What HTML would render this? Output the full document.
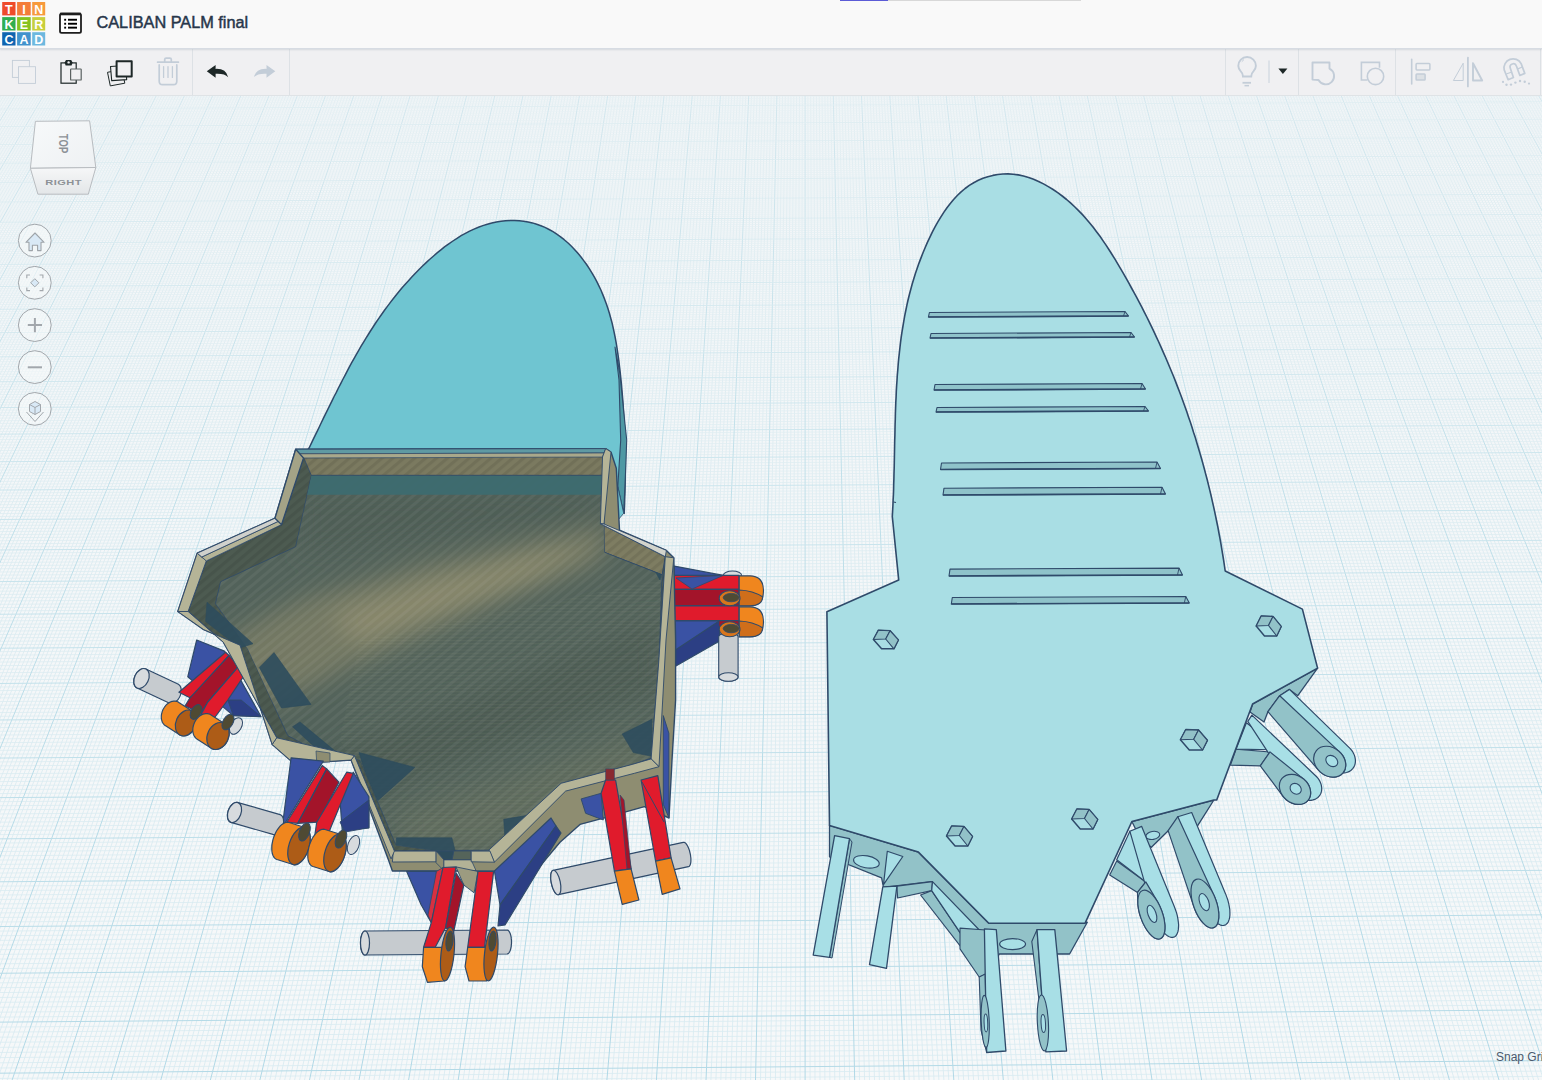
<!DOCTYPE html>
<html><head><meta charset="utf-8">
<style>
html,body{margin:0;padding:0;width:1542px;height:1080px;overflow:hidden;background:#f4f6f7;font-family:"Liberation Sans",sans-serif;}
#hdr{position:absolute;left:0;top:0;width:1542px;height:49px;background:#f9f9f9;border-bottom:1px solid #d7dce3;box-sizing:border-box;z-index:2;box-shadow:0 1px 1.5px rgba(180,188,200,0.45);}
#tb{position:absolute;left:0;top:49px;width:1542px;height:47px;background:#f0f0f2;border-bottom:1px solid #dfe3e6;box-sizing:border-box;}
#cv{position:absolute;left:0;top:0;}
.title{position:absolute;left:96.5px;top:13px;font-size:16.3px;color:#27364a;-webkit-text-stroke:0.45px #27364a;transform-origin:0 0;white-space:nowrap;}
.sep{position:absolute;top:49px;width:1px;height:46px;background:#dde1e5;}
</style></head><body>
<svg id="cv" width="1542" height="1080" viewBox="0 0 1542 1080">
<defs>
<linearGradient id="gbg" gradientUnits="userSpaceOnUse" x1="0" y1="96" x2="0" y2="1080"><stop offset="0" stop-color="#f3f6f8"/><stop offset="1" stop-color="#f6f8f9"/></linearGradient>
<linearGradient id="gmin" gradientUnits="userSpaceOnUse" x1="0" y1="96" x2="0" y2="1080"><stop offset="0" stop-color="#dcebf0"/><stop offset="0.5" stop-color="#d9eaf0"/><stop offset="1" stop-color="#d6eaf1"/></linearGradient>
<linearGradient id="ghmin" gradientUnits="userSpaceOnUse" x1="0" y1="96" x2="0" y2="1080"><stop offset="0" stop-color="#e8f1f4"/><stop offset="0.5" stop-color="#dcecf1"/><stop offset="1" stop-color="#d8ebf1"/></linearGradient>
<linearGradient id="gmaj" gradientUnits="userSpaceOnUse" x1="0" y1="96" x2="0" y2="1080"><stop offset="0" stop-color="#d3e7ee"/><stop offset="0.4" stop-color="#bfdfe9"/><stop offset="1" stop-color="#b0d8e6"/></linearGradient>
<linearGradient id="ghmaj" gradientUnits="userSpaceOnUse" x1="0" y1="96" x2="0" y2="1080"><stop offset="0" stop-color="#e1eef2"/><stop offset="0.4" stop-color="#cbe5ed"/><stop offset="1" stop-color="#b2d9e6"/></linearGradient>
</defs>
<rect x="0" y="96" width="1542" height="984" fill="url(#gbg)"/>
<path d="M-2 96L-612.4 1080M0.9 96L-607.4 1080M3.7 96L-602.5 1080M6.5 96L-597.5 1080M9.3 96L-592.5 1080M12.2 96L-587.6 1080M17.8 96L-577.7 1080M20.6 96L-572.7 1080M23.4 96L-567.8 1080M26.3 96L-562.8 1080M29.1 96L-557.8 1080M31.9 96L-552.9 1080M34.7 96L-547.9 1080M37.6 96L-543 1080M40.4 96L-538 1080M46 96L-528.1 1080M48.8 96L-523.2 1080M51.7 96L-518.2 1080M54.5 96L-513.2 1080M57.3 96L-508.3 1080M60.1 96L-503.3 1080M62.9 96L-498.4 1080M65.8 96L-493.4 1080M68.6 96L-488.5 1080M74.2 96L-478.5 1080M77.1 96L-473.6 1080M79.9 96L-468.6 1080M82.7 96L-463.7 1080M85.5 96L-458.7 1080M88.3 96L-453.8 1080M91.2 96L-448.8 1080M94 96L-443.9 1080M96.8 96L-438.9 1080M102.5 96L-429 1080M105.3 96L-424 1080M108.1 96L-419.1 1080M110.9 96L-414.1 1080M113.7 96L-409.2 1080M116.6 96L-404.2 1080M119.4 96L-399.2 1080M122.2 96L-394.3 1080M125 96L-389.3 1080M130.7 96L-379.4 1080M133.5 96L-374.5 1080M136.3 96L-369.5 1080M139.1 96L-364.6 1080M142 96L-359.6 1080M144.8 96L-354.6 1080M147.6 96L-349.7 1080M150.4 96L-344.7 1080M153.2 96L-339.8 1080M158.9 96L-329.9 1080M161.7 96L-324.9 1080M164.5 96L-319.9 1080M167.4 96L-315 1080M170.2 96L-310 1080M173 96L-305.1 1080M175.8 96L-300.1 1080M178.6 96L-295.2 1080M181.5 96L-290.2 1080M187.1 96L-280.3 1080M189.9 96L-275.3 1080M192.8 96L-270.4 1080M195.6 96L-265.4 1080M198.4 96L-260.5 1080M201.2 96L-255.5 1080M204 96L-250.6 1080M206.9 96L-245.6 1080M209.7 96L-240.7 1080M215.3 96L-230.7 1080M218.2 96L-225.8 1080M221 96L-220.8 1080M223.8 96L-215.9 1080M226.6 96L-210.9 1080M229.4 96L-206 1080M232.3 96L-201 1080M235.1 96L-196 1080M237.9 96L-191.1 1080M243.5 96L-181.2 1080M246.4 96L-176.2 1080M249.2 96L-171.3 1080M252 96L-166.3 1080M254.8 96L-161.4 1080M257.7 96L-156.4 1080M260.5 96L-151.4 1080M263.3 96L-146.5 1080M266.1 96L-141.5 1080M271.8 96L-131.6 1080M274.6 96L-126.7 1080M277.4 96L-121.7 1080M280.2 96L-116.7 1080M283.1 96L-111.8 1080M285.9 96L-106.8 1080M288.7 96L-101.9 1080M291.5 96L-96.9 1080M294.3 96L-92 1080M300 96L-82.1 1080M302.8 96L-77.1 1080M305.6 96L-72.1 1080M308.5 96L-67.2 1080M311.3 96L-62.2 1080M314.1 96L-57.3 1080M316.9 96L-52.3 1080M319.7 96L-47.4 1080M322.6 96L-42.4 1080M328.2 96L-32.5 1080M331 96L-27.5 1080M333.8 96L-22.6 1080M336.7 96L-17.6 1080M339.5 96L-12.7 1080M342.3 96L-7.7 1080M345.1 96L-2.8 1080M348 96L2.2 1080M350.8 96L7.2 1080M356.4 96L17.1 1080M359.2 96L22 1080M362.1 96L27 1080M364.9 96L31.9 1080M367.7 96L36.9 1080M370.5 96L41.9 1080M373.4 96L46.8 1080M376.2 96L51.8 1080M379 96L56.7 1080M384.6 96L66.6 1080M387.5 96L71.6 1080M390.3 96L76.5 1080M393.1 96L81.5 1080M395.9 96L86.5 1080M398.8 96L91.4 1080M401.6 96L96.4 1080M404.4 96L101.3 1080M407.2 96L106.3 1080M412.9 96L116.2 1080M415.7 96L121.1 1080M418.5 96L126.1 1080M421.3 96L131.1 1080M424.1 96L136 1080M427 96L141 1080M429.8 96L145.9 1080M432.6 96L150.9 1080M435.4 96L155.8 1080M441.1 96L165.8 1080M443.9 96L170.7 1080M446.7 96L175.7 1080M449.5 96L180.6 1080M452.4 96L185.6 1080M455.2 96L190.5 1080M458 96L195.5 1080M460.8 96L200.4 1080M463.7 96L205.4 1080M469.3 96L215.3 1080M472.1 96L220.3 1080M474.9 96L225.2 1080M477.8 96L230.2 1080M480.6 96L235.1 1080M483.4 96L240.1 1080M486.2 96L245.1 1080M489.1 96L250 1080M491.9 96L255 1080M497.5 96L264.9 1080M500.3 96L269.8 1080M503.2 96L274.8 1080M506 96L279.7 1080M508.8 96L284.7 1080M511.6 96L289.7 1080M514.4 96L294.6 1080M517.3 96L299.6 1080M520.1 96L304.5 1080M525.7 96L314.4 1080M528.6 96L319.4 1080M531.4 96L324.4 1080M534.2 96L329.3 1080M537 96L334.3 1080M539.8 96L339.2 1080M542.7 96L344.2 1080M545.5 96L349.1 1080M548.3 96L354.1 1080M554 96L364 1080M556.8 96L369 1080M559.6 96L373.9 1080M562.4 96L378.9 1080M565.2 96L383.8 1080M568.1 96L388.8 1080M570.9 96L393.7 1080M573.7 96L398.7 1080M576.5 96L403.7 1080M582.2 96L413.6 1080M585 96L418.5 1080M587.8 96L423.5 1080M590.6 96L428.4 1080M593.5 96L433.4 1080M596.3 96L438.3 1080M599.1 96L443.3 1080M601.9 96L448.3 1080M604.7 96L453.2 1080M610.4 96L463.1 1080M613.2 96L468.1 1080M616 96L473 1080M618.9 96L478 1080M621.7 96L482.9 1080M624.5 96L487.9 1080M627.3 96L492.9 1080M630.1 96L497.8 1080M633 96L502.8 1080M638.6 96L512.7 1080M641.4 96L517.6 1080M644.3 96L522.6 1080M647.1 96L527.6 1080M649.9 96L532.5 1080M652.7 96L537.5 1080M655.5 96L542.4 1080M658.4 96L547.4 1080M661.2 96L552.3 1080M666.8 96L562.2 1080M669.7 96L567.2 1080M672.5 96L572.2 1080M675.3 96L577.1 1080M678.1 96L582.1 1080M680.9 96L587 1080M683.8 96L592 1080M686.6 96L596.9 1080M689.4 96L601.9 1080M695 96L611.8 1080M697.9 96L616.8 1080M700.7 96L621.7 1080M703.5 96L626.7 1080M706.3 96L631.6 1080M709.2 96L636.6 1080M712 96L641.5 1080M714.8 96L646.5 1080M717.6 96L651.5 1080M723.3 96L661.4 1080M726.1 96L666.3 1080M728.9 96L671.3 1080M731.7 96L676.2 1080M734.6 96L681.2 1080M737.4 96L686.2 1080M740.2 96L691.1 1080M743 96L696.1 1080M745.8 96L701 1080M751.5 96L710.9 1080M754.3 96L715.9 1080M757.1 96L720.8 1080M760 96L725.8 1080M762.8 96L730.8 1080M765.6 96L735.7 1080M768.4 96L740.7 1080M771.2 96L745.6 1080M774.1 96L750.6 1080M779.7 96L760.5 1080M782.5 96L765.5 1080M785.3 96L770.4 1080M788.2 96L775.4 1080M791 96L780.3 1080M793.8 96L785.3 1080M796.6 96L790.2 1080M799.5 96L795.2 1080M802.3 96L800.1 1080M807.9 96L810.1 1080M810.7 96L815 1080M813.6 96L820 1080M816.4 96L824.9 1080M819.2 96L829.9 1080M822 96L834.8 1080M824.9 96L839.8 1080M827.7 96L844.7 1080M830.5 96L849.7 1080M836.1 96L859.6 1080M839 96L864.6 1080M841.8 96L869.5 1080M844.6 96L874.5 1080M847.4 96L879.4 1080M850.2 96L884.4 1080M853.1 96L889.4 1080M855.9 96L894.3 1080M858.7 96L899.3 1080M864.4 96L909.2 1080M867.2 96L914.1 1080M870 96L919.1 1080M872.8 96L924 1080M875.6 96L929 1080M878.5 96L934 1080M881.3 96L938.9 1080M884.1 96L943.9 1080M886.9 96L948.8 1080M892.6 96L958.7 1080M895.4 96L963.7 1080M898.2 96L968.7 1080M901 96L973.6 1080M903.9 96L978.6 1080M906.7 96L983.5 1080M909.5 96L988.5 1080M912.3 96L993.4 1080M915.2 96L998.4 1080M920.8 96L1008.3 1080M923.6 96L1013.3 1080M926.4 96L1018.2 1080M929.3 96L1023.2 1080M932.1 96L1028.1 1080M934.9 96L1033.1 1080M937.7 96L1038 1080M940.5 96L1043 1080M943.4 96L1048 1080M949 96L1057.9 1080M951.8 96L1062.8 1080M954.7 96L1067.8 1080M957.5 96L1072.7 1080M960.3 96L1077.7 1080M963.1 96L1082.6 1080M965.9 96L1087.6 1080M968.8 96L1092.6 1080M971.6 96L1097.5 1080M977.2 96L1107.4 1080M980.1 96L1112.4 1080M982.9 96L1117.3 1080M985.7 96L1122.3 1080M988.5 96L1127.3 1080M991.3 96L1132.2 1080M994.2 96L1137.2 1080M997 96L1142.1 1080M999.8 96L1147.1 1080M1005.5 96L1157 1080M1008.3 96L1161.9 1080M1011.1 96L1166.9 1080M1013.9 96L1171.9 1080M1016.7 96L1176.8 1080M1019.6 96L1181.8 1080M1022.4 96L1186.7 1080M1025.2 96L1191.7 1080M1028 96L1196.6 1080M1033.7 96L1206.5 1080M1036.5 96L1211.5 1080M1039.3 96L1216.5 1080M1042.1 96L1221.4 1080M1045 96L1226.4 1080M1047.8 96L1231.3 1080M1050.6 96L1236.3 1080M1053.4 96L1241.2 1080M1056.2 96L1246.2 1080M1061.9 96L1256.1 1080M1064.7 96L1261.1 1080M1067.5 96L1266 1080M1070.4 96L1271 1080M1073.2 96L1275.9 1080M1076 96L1280.9 1080M1078.8 96L1285.8 1080M1081.6 96L1290.8 1080M1084.5 96L1295.8 1080M1090.1 96L1305.7 1080M1092.9 96L1310.6 1080M1095.8 96L1315.6 1080M1098.6 96L1320.5 1080M1101.4 96L1325.5 1080M1104.2 96L1330.5 1080M1107 96L1335.4 1080M1109.9 96L1340.4 1080M1112.7 96L1345.3 1080M1118.3 96L1355.2 1080M1121.1 96L1360.2 1080M1124 96L1365.1 1080M1126.8 96L1370.1 1080M1129.6 96L1375.1 1080M1132.4 96L1380 1080M1135.3 96L1385 1080M1138.1 96L1389.9 1080M1140.9 96L1394.9 1080M1146.5 96L1404.8 1080M1149.4 96L1409.8 1080M1152.2 96L1414.7 1080M1155 96L1419.7 1080M1157.8 96L1424.6 1080M1160.7 96L1429.6 1080M1163.5 96L1434.5 1080M1166.3 96L1439.5 1080M1169.1 96L1444.4 1080M1174.8 96L1454.4 1080M1177.6 96L1459.3 1080M1180.4 96L1464.3 1080M1183.2 96L1469.2 1080M1186.1 96L1474.2 1080M1188.9 96L1479.1 1080M1191.7 96L1484.1 1080M1194.5 96L1489.1 1080M1197.3 96L1494 1080M1203 96L1503.9 1080M1205.8 96L1508.9 1080M1208.6 96L1513.8 1080M1211.4 96L1518.8 1080M1214.3 96L1523.7 1080M1217.1 96L1528.7 1080M1219.9 96L1533.7 1080M1222.7 96L1538.6 1080M1225.6 96L1543.6 1080M1231.2 96L1553.5 1080M1234 96L1558.4 1080M1236.8 96L1563.4 1080M1239.7 96L1568.3 1080M1242.5 96L1573.3 1080M1245.3 96L1578.3 1080M1248.1 96L1583.2 1080M1251 96L1588.2 1080M1253.8 96L1593.1 1080M1259.4 96L1603 1080M1262.2 96L1608 1080M1265.1 96L1613 1080M1267.9 96L1617.9 1080M1270.7 96L1622.9 1080M1273.5 96L1627.8 1080M1276.4 96L1632.8 1080M1279.2 96L1637.7 1080M1282 96L1642.7 1080M1287.6 96L1652.6 1080M1290.5 96L1657.6 1080M1293.3 96L1662.5 1080M1296.1 96L1667.5 1080M1298.9 96L1672.4 1080M1301.7 96L1677.4 1080M1304.6 96L1682.3 1080M1307.4 96L1687.3 1080M1310.2 96L1692.3 1080M1315.9 96L1702.2 1080M1318.7 96L1707.1 1080M1321.5 96L1712.1 1080M1324.3 96L1717 1080M1327.1 96L1722 1080M1330 96L1726.9 1080M1332.8 96L1731.9 1080M1335.6 96L1736.9 1080M1338.4 96L1741.8 1080M1344.1 96L1751.7 1080M1346.9 96L1756.7 1080M1349.7 96L1761.6 1080M1352.5 96L1766.6 1080M1355.4 96L1771.6 1080M1358.2 96L1776.5 1080M1361 96L1781.5 1080M1363.8 96L1786.4 1080M1366.7 96L1791.4 1080M1372.3 96L1801.3 1080M1375.1 96L1806.2 1080M1377.9 96L1811.2 1080M1380.8 96L1816.2 1080M1383.6 96L1821.1 1080M1386.4 96L1826.1 1080M1389.2 96L1831 1080M1392 96L1836 1080M1394.9 96L1840.9 1080M1400.5 96L1850.9 1080M1403.3 96L1855.8 1080M1406.2 96L1860.8 1080M1409 96L1865.7 1080M1411.8 96L1870.7 1080M1414.6 96L1875.6 1080M1417.4 96L1880.6 1080M1420.3 96L1885.5 1080M1423.1 96L1890.5 1080M1428.7 96L1900.4 1080M1431.6 96L1905.4 1080M1434.4 96L1910.3 1080M1437.2 96L1915.3 1080M1440 96L1920.2 1080M1442.8 96L1925.2 1080M1445.7 96L1930.1 1080M1448.5 96L1935.1 1080M1451.3 96L1940.1 1080M1457 96L1950 1080M1459.8 96L1954.9 1080M1462.6 96L1959.9 1080M1465.4 96L1964.8 1080M1468.2 96L1969.8 1080M1471.1 96L1974.8 1080M1473.9 96L1979.7 1080M1476.7 96L1984.7 1080M1479.5 96L1989.6 1080M1485.2 96L1999.5 1080M1488 96L2004.5 1080M1490.8 96L2009.4 1080M1493.6 96L2014.4 1080M1496.5 96L2019.4 1080M1499.3 96L2024.3 1080M1502.1 96L2029.3 1080M1504.9 96L2034.2 1080M1507.7 96L2039.2 1080M1513.4 96L2049.1 1080M1516.2 96L2054.1 1080M1519 96L2059 1080M1521.9 96L2064 1080M1524.7 96L2068.9 1080M1527.5 96L2073.9 1080M1530.3 96L2078.8 1080M1533.1 96L2083.8 1080M1536 96L2088.7 1080M1541.6 96L2098.7 1080" stroke="url(#gmin)" stroke-width="0.8" fill="none"/>
<path d="M-464.4 95.6L2063.2 83.9M-466.1 97.3L2064.8 85.6M-467.7 99.1L2066.4 87.3M-469.4 100.8L2068.1 89M-471.1 102.5L2069.7 90.7M-472.8 104.2L2071.4 92.4M-474.5 106L2073.1 94.1M-476.2 107.7L2074.7 95.8M-477.9 109.4L2076.4 97.5M-481.3 112.9L2079.7 100.9M-483 114.7L2081.4 102.6M-484.7 116.5L2083.1 104.4M-486.4 118.2L2084.8 106.1M-488.2 120L2086.5 107.8M-489.9 121.8L2088.2 109.6M-491.6 123.5L2089.9 111.3M-493.4 125.3L2091.6 113.1M-495.1 127.1L2093.3 114.8M-498.6 130.7L2096.8 118.4M-500.4 132.5L2098.5 120.1M-502.1 134.3L2100.2 121.9M-503.9 136.1L2102 123.7M-505.7 138L2103.7 125.5M-507.5 139.8L2105.5 127.3M-509.3 141.6L2107.2 129.1M-511 143.4L2109 130.9M-512.8 145.3L2110.7 132.7M-516.4 149L2114.3 136.3M-518.2 150.8L2116 138.1M-520.1 152.7L2117.8 139.9M-521.9 154.5L2119.6 141.8M-523.7 156.4L2121.4 143.6M-525.5 158.3L2123.2 145.4M-527.4 160.2L2125 147.3M-529.2 162L2126.8 149.1M-531 163.9L2128.6 151M-534.8 167.7L2132.2 154.7M-536.6 169.6L2134.1 156.6M-538.5 171.5L2135.9 158.4M-540.3 173.5L2137.7 160.3M-542.2 175.4L2139.6 162.2M-544.1 177.3L2141.4 164.1M-546 179.2L2143.3 166M-547.9 181.2L2145.1 167.9M-549.8 183.1L2147 169.8M-553.6 187L2150.7 173.6M-555.5 189L2152.6 175.5M-557.4 190.9L2154.5 177.5M-559.3 192.9L2156.3 179.4M-561.3 194.9L2158.2 181.3M-563.2 196.9L2160.1 183.3M-565.1 198.9L2162 185.2M-567.1 200.9L2163.9 187.2M-569 202.8L2165.9 189.1M-572.9 206.9L2169.7 193.1M-574.9 208.9L2171.6 195.1M-576.9 210.9L2173.6 197M-578.9 212.9L2175.5 199M-580.8 215L2177.4 201M-582.8 217L2179.4 203M-584.8 219L2181.4 205M-586.8 221.1L2183.3 207M-588.8 223.1L2185.3 209M-592.9 227.3L2189.2 213.1M-594.9 229.3L2191.2 215.1M-596.9 231.4L2193.2 217.2M-599 233.5L2195.2 219.2M-601 235.6L2197.2 221.3M-603.1 237.7L2199.2 223.3M-605.1 239.8L2201.2 225.4M-607.2 241.9L2203.2 227.5M-609.2 244L2205.3 229.5M-613.4 248.3L2209.3 233.7M-615.5 250.4L2211.4 235.8M-617.6 252.6L2213.4 237.9M-619.7 254.7L2215.5 240M-621.8 256.9L2217.5 242.1M-623.9 259L2219.6 244.2M-626 261.2L2221.7 246.3M-628.1 263.4L2223.8 248.5M-630.2 265.5L2225.8 250.6M-634.5 269.9L2230 254.9M-636.7 272.1L2232.1 257.1M-638.8 274.3L2234.2 259.2M-641 276.5L2236.4 261.4M-643.1 278.8L2238.5 263.6M-645.3 281L2240.6 265.7M-647.5 283.2L2242.7 267.9M-649.7 285.5L2244.9 270.1M-651.9 287.7L2247 272.3M-656.3 292.2L2251.3 276.7M-658.5 294.5L2253.5 279M-660.7 296.8L2255.7 281.2M-662.9 299L2257.9 283.4M-665.2 301.3L2260.1 285.7M-667.4 303.6L2262.2 287.9M-669.6 305.9L2264.4 290.2M-671.9 308.2L2266.6 292.4M-674.2 310.5L2268.9 294.7M-678.7 315.2L2273.3 299.2M-681 317.5L2275.5 301.5M-683.3 319.9L2277.8 303.8M-685.6 322.2L2280 306.1M-687.9 324.6L2282.3 308.4M-690.2 327L2284.5 310.7M-692.5 329.3L2286.8 313.1M-694.8 331.7L2289.1 315.4M-697.1 334.1L2291.4 317.7M-701.8 338.9L2295.9 322.4M-704.2 341.3L2298.3 324.8M-706.5 343.7L2300.6 327.2M-708.9 346.1L2302.9 329.5M-711.3 348.6L2305.2 331.9M-713.7 351L2307.5 334.3M-716 353.5L2309.9 336.7M-718.4 355.9L2312.2 339.1M-720.8 358.4L2314.6 341.5M-725.7 363.3L2319.3 346.4M-728.1 365.8L2321.7 348.8M-730.5 368.3L2324.1 351.2M-733 370.8L2326.4 353.7M-735.4 373.3L2328.8 356.1M-737.9 375.9L2331.2 358.6M-740.4 378.4L2333.7 361.1M-742.8 380.9L2336.1 363.5M-745.3 383.5L2338.5 366M-750.3 388.6L2343.4 371M-752.8 391.1L2345.8 373.5M-755.3 393.7L2348.3 376.1M-757.8 396.3L2350.8 378.6M-760.4 398.9L2353.2 381.1M-762.9 401.5L2355.7 383.7M-765.5 404.1L2358.2 386.2M-768 406.7L2360.7 388.8M-770.6 409.3L2363.2 391.4M-775.7 414.6L2368.3 396.5M-778.3 417.3L2370.8 399.1M-780.9 419.9L2373.3 401.7M-783.5 422.6L2375.9 404.3M-786.1 425.3L2378.4 406.9M-788.8 428L2381 409.6M-791.4 430.7L2383.6 412.2M-794 433.4L2386.2 414.8M-796.7 436.1L2388.7 417.5M-802 441.5L2393.9 422.8M-804.7 444.3L2396.6 425.5M-807.4 447L2399.2 428.2M-810.1 449.8L2401.8 430.9M-812.8 452.6L2404.5 433.6M-815.5 455.3L2407.1 436.3M-818.2 458.1L2409.8 439M-820.9 460.9L2412.4 441.8M-823.7 463.7L2415.1 444.5M-829.2 469.4L2420.5 450M-831.9 472.2L2423.2 452.8M-834.7 475.1L2425.9 455.6M-837.5 477.9L2428.6 458.4M-840.3 480.8L2431.4 461.2M-843.1 483.7L2434.1 464M-845.9 486.5L2436.9 466.8M-848.7 489.4L2439.6 469.6M-851.6 492.3L2442.4 472.5M-857.3 498.2L2447.9 478.2M-860.1 501.1L2450.7 481M-863 504L2453.5 483.9M-865.9 507L2456.4 486.8M-868.8 510L2459.2 489.7M-871.7 512.9L2462 492.6M-874.6 515.9L2464.9 495.5M-877.5 518.9L2467.7 498.4M-880.5 521.9L2470.6 501.4M-886.4 528L2476.3 507.2M-889.3 531L2479.2 510.2M-892.3 534.1L2482.1 513.2M-895.3 537.1L2485.1 516.2M-898.3 540.2L2488 519.2M-901.3 543.3L2490.9 522.2M-904.3 546.4L2493.9 525.2M-907.3 549.5L2496.8 528.2M-910.4 552.6L2499.8 531.3M-916.5 558.8L2505.7 537.4M-919.6 562L2508.7 540.4M-922.6 565.1L2511.7 543.5M-925.7 568.3L2514.8 546.6M-928.8 571.5L2517.8 549.7M-931.9 574.7L2520.8 552.8M-935.1 577.9L2523.9 556M-938.2 581.1L2526.9 559.1M-941.4 584.3L2530 562.2M-947.7 590.8L2536.2 568.6M-950.9 594.1L2539.3 571.7M-954.1 597.3L2542.4 574.9M-957.3 600.6L2545.5 578.1M-960.5 603.9L2548.7 581.4M-963.7 607.2L2551.8 584.6M-967 610.6L2555 587.8M-970.2 613.9L2558.2 591.1M-973.5 617.2L2561.3 594.3M-980.1 624L2567.7 600.9M-983.4 627.3L2571 604.2M-986.7 630.7L2574.2 607.5M-990 634.1L2577.4 610.8M-993.3 637.6L2580.7 614.2M-996.7 641L2584 617.5M-1000.1 644.4L2587.2 620.9M-1003.4 647.9L2590.5 624.2M-1006.8 651.4L2593.8 627.6M-1013.6 658.4L2600.5 634.4M-1017.1 661.9L2603.8 637.9M-1020.5 665.4L2607.2 641.3M-1024 668.9L2610.5 644.7M-1027.4 672.5L2613.9 648.2M-1030.9 676.1L2617.3 651.7M-1034.4 679.6L2620.7 655.2M-1037.9 683.2L2624.1 658.7M-1041.4 686.8L2627.6 662.2M-1048.5 694.1L2634.4 669.2M-1052.1 697.7L2637.9 672.8M-1055.6 701.4L2641.4 676.4M-1059.2 705.1L2644.9 679.9M-1062.8 708.8L2648.4 683.5M-1066.4 712.5L2651.9 687.1M-1070.1 716.2L2655.5 690.8M-1073.7 719.9L2659 694.4M-1077.4 723.7L2662.6 698M-1084.7 731.2L2669.7 705.4M-1088.4 735L2673.3 709.1M-1092.2 738.8L2677 712.8M-1095.9 742.6L2680.6 716.5M-1099.6 746.5L2684.2 720.2M-1103.4 750.3L2687.9 724M-1107.2 754.2L2691.6 727.7M-1111 758.1L2695.2 731.5M-1114.8 762L2699 735.3M-1122.4 769.8L2706.4 743M-1126.3 773.8L2710.1 746.8M-1130.1 777.7L2713.9 750.6M-1134 781.7L2717.7 754.5M-1137.9 785.7L2721.5 758.4M-1141.8 789.7L2725.3 762.3M-1145.7 793.7L2729.1 766.2M-1149.7 797.8L2732.9 770.1M-1153.7 801.8L2736.8 774.1M-1161.6 810L2744.5 782M-1165.6 814.1L2748.4 786M-1169.7 818.2L2752.4 790M-1173.7 822.4L2756.3 794.1M-1177.8 826.5L2760.2 798.1M-1181.8 830.7L2764.2 802.2M-1185.9 834.9L2768.2 806.2M-1190 839.1L2772.2 810.3M-1194.2 843.3L2776.2 814.4M-1202.5 851.8L2784.2 822.7M-1206.6 856.1L2788.3 826.9M-1210.8 860.4L2792.4 831M-1215 864.7L2796.5 835.2M-1219.3 869L2800.6 839.4M-1223.5 873.4L2804.7 843.7M-1227.8 877.8L2808.9 847.9M-1232.1 882.2L2813 852.2M-1236.4 886.6L2817.2 856.5M-1245 895.4L2825.6 865.1M-1249.4 899.9L2829.8 869.4M-1253.8 904.4L2834.1 873.8M-1258.2 908.9L2838.3 878.1M-1262.6 913.4L2842.6 882.5M-1267 917.9L2846.9 886.9M-1271.5 922.5L2851.3 891.4M-1275.9 927.1L2855.6 895.8M-1280.4 931.7L2860 900.3M-1289.4 940.9L2868.7 909.3M-1294 945.6L2873.1 913.8M-1298.6 950.3L2877.6 918.3M-1303.1 955L2882 922.9M-1307.8 959.7L2886.5 927.5M-1312.4 964.4L2891 932.1M-1317 969.2L2895.5 936.7M-1321.7 974L2900 941.3M-1326.4 978.8L2904.6 946M-1335.8 988.5L2913.7 955.4M-1340.6 993.3L2918.3 960.1M-1345.3 998.2L2923 964.8M-1350.1 1003.1L2927.6 969.6M-1355 1008.1L2932.3 974.4M-1359.8 1013L2937 979.2M-1364.7 1018L2941.7 984M-1369.5 1023L2946.4 988.9M-1374.4 1028L2951.2 993.7M-1384.3 1038.1L2960.7 1003.5M-1389.3 1043.2L2965.6 1008.5M-1394.3 1048.3L2970.4 1013.4M-1399.3 1053.5L2975.3 1018.4M-1404.3 1058.6L2980.1 1023.4M-1409.4 1063.8L2985.1 1028.4M-1414.5 1069L2990 1033.5M-1419.6 1074.3L2994.9 1038.6M-1424.7 1079.5L2999.9 1043.7M-1435 1090.1L3009.9 1053.9M-1440.2 1095.4L3014.9 1059.1M-1445.5 1100.8L3020 1064.3M-1450.7 1106.2L3025.1 1069.5M-1456 1111.6L3030.2 1074.7M-1461.3 1117L3035.3 1080" stroke="url(#ghmin)" stroke-width="0.8" fill="none"/>
<path d="M15 96L-582.6 1080M43.2 96L-533.1 1080M71.4 96L-483.5 1080M99.6 96L-433.9 1080M127.9 96L-384.4 1080M156.1 96L-334.8 1080M184.3 96L-285.3 1080M212.5 96L-235.7 1080M240.7 96L-186.1 1080M268.9 96L-136.6 1080M297.2 96L-87 1080M325.4 96L-37.4 1080M353.6 96L12.1 1080M381.8 96L61.7 1080M410 96L111.2 1080M438.3 96L160.8 1080M466.5 96L210.4 1080M494.7 96L259.9 1080M522.9 96L309.5 1080M551.1 96L359 1080M579.4 96L408.6 1080M607.6 96L458.2 1080M635.8 96L507.7 1080M664 96L557.3 1080M692.2 96L606.9 1080M720.4 96L656.4 1080M748.7 96L706 1080M776.9 96L755.5 1080M805.1 96L805.1 1080M833.3 96L854.7 1080M861.5 96L904.2 1080M889.8 96L953.8 1080M918 96L1003.3 1080M946.2 96L1052.9 1080M974.4 96L1102.5 1080M1002.6 96L1152 1080M1030.8 96L1201.6 1080M1059.1 96L1251.2 1080M1087.3 96L1300.7 1080M1115.5 96L1350.3 1080M1143.7 96L1399.8 1080M1171.9 96L1449.4 1080M1200.2 96L1499 1080M1228.4 96L1548.5 1080M1256.6 96L1598.1 1080M1284.8 96L1647.6 1080M1313 96L1697.2 1080M1341.3 96L1746.8 1080M1369.5 96L1796.3 1080M1397.7 96L1845.9 1080M1425.9 96L1895.5 1080M1454.1 96L1945 1080M1482.3 96L1994.6 1080M1510.6 96L2044.1 1080M1538.8 96L2093.7 1080" stroke="url(#gmaj)" stroke-width="1" fill="none"/>
<path d="M-479.6 111.2L2078.1 99.2M-496.9 128.9L2095 116.6M-514.6 147.1L2112.5 134.5M-532.9 165.8L2130.4 152.8M-551.7 185.1L2148.8 171.7M-571 204.9L2167.8 191.1M-590.9 225.2L2187.3 211.1M-611.3 246.2L2207.3 231.6M-632.4 267.7L2227.9 252.7M-654.1 290L2249.2 274.5M-676.4 312.9L2271.1 297M-699.5 336.5L2293.7 320.1M-723.3 360.9L2316.9 343.9M-747.8 386L2340.9 368.5M-773.2 412L2365.7 393.9M-799.3 438.8L2391.3 420.2M-826.4 466.6L2417.8 447.3M-854.4 495.2L2445.2 475.3M-883.4 524.9L2473.5 504.3M-913.4 555.7L2502.8 534.3M-944.5 587.6L2533.1 565.4M-976.8 620.6L2564.5 597.6M-1010.2 654.9L2597.2 631M-1045 690.5L2631 665.7M-1081.1 727.4L2666.1 701.7M-1118.6 765.9L2702.7 739.1M-1157.6 805.9L2740.7 778.1M-1198.3 847.6L2780.2 818.6M-1240.7 891L2821.4 860.8M-1284.9 936.3L2864.3 904.8M-1331.1 983.6L2909.1 950.7M-1379.4 1033.1L2956 998.6M-1429.9 1084.8L3004.9 1048.8" stroke="url(#ghmaj)" stroke-width="1" fill="none"/>
<g id="leftmodel">
<defs>
<pattern id="stripes" patternUnits="userSpaceOnUse" width="7" height="7" patternTransform="rotate(-40)">
<rect x="0" y="0" width="7" height="3" fill="#ffffff" fill-opacity="0.05"/>
</pattern>
<pattern id="stripes2" patternUnits="userSpaceOnUse" width="7" height="7" patternTransform="rotate(-40)">
<rect x="0" y="0" width="7" height="3.2" fill="#000000" fill-opacity="0.08"/>
</pattern>
<pattern id="hlines" patternUnits="userSpaceOnUse" width="20" height="3.2">
<rect x="0" y="0" width="20" height="1" fill="#c8c49a" fill-opacity="0.07"/>
</pattern>
<filter id="blur8" x="-30%" y="-30%" width="160%" height="160%"><feGaussianBlur stdDeviation="12"/></filter>
<clipPath id="floorclip"><polygon points="311.3,475.4 603,475.4 604.6,552.4 662.1,574.8 658.9,660 651.1,757.8 632.2,764.4 561.1,783.3 488.9,850 436.7,850.7 396,845 360,760 316.7,751.1 287.8,735.6 247.8,648.9 215.4,603.7 220.6,581.7 295.7,546.7"/></clipPath>
</defs>
<path d="M309.1 448.0L311.2 443.7L313.2 439.4L315.3 435.1L317.4 430.8L319.5 426.5L321.5 422.2L323.6 417.9L325.7 413.6L327.8 409.4L329.9 405.1L332.0 400.8L334.1 396.5L336.3 392.3L338.4 388.0L340.6 383.8L342.8 379.5L345.0 375.3L347.2 371.1L349.4 366.9L351.7 362.7L354.0 358.6L356.4 354.4L358.7 350.3L361.1 346.2L363.6 342.1L366.0 338.1L368.6 334.0L371.1 330.0L373.7 326.0L376.3 322.0L379.0 318.1L381.7 314.2L384.5 310.3L387.4 306.4L390.2 302.6L393.2 298.8L396.2 295.0L399.2 291.3L402.3 287.6L405.5 284.0L408.7 280.4L412.0 276.8L415.4 273.2L418.8 269.7L422.3 266.3L425.9 262.9L429.5 259.5L433.3 256.2L437.1 252.9L440.9 249.8L444.8 246.7L448.8 243.8L452.9 241.0L457.0 238.3L461.1 235.7L465.4 233.4L469.6 231.1L474.0 229.1L478.4 227.3L482.8 225.6L487.3 224.2L491.8 223.0L496.4 222.1L501.0 221.3L505.5 220.8L510.1 220.6L514.6 220.5L519.2 220.8L523.6 221.2L528.1 222.0L532.4 222.9L536.7 224.2L540.9 225.7L545.0 227.4L549.1 229.5L553.0 231.7L556.8 234.2L560.6 236.8L564.2 239.7L567.8 242.8L571.2 246.0L574.5 249.4L577.7 253.0L580.8 256.7L583.7 260.6L586.6 264.5L589.3 268.6L591.9 272.8L594.4 277.1L596.7 281.4L598.9 285.9L601.0 290.3L602.9 294.9L604.7 299.4L606.4 304.0L608.0 308.7L609.4 313.3L610.7 318.0L612.0 322.7L613.1 327.5L614.1 332.2L615.1 337.0L616.0 341.8L616.8 346.6L617.5 351.4L618.2 356.2L618.9 361.0L619.4 365.8L620.0 370.6L620.5 375.4L621.0 380.2L621.5 385.0L621.9 389.7L622.3 394.5L622.7 399.2L623.0 404.0L623.4 408.7L623.6 413.4L623.9 418.1L624.2 422.9L624.4 427.6L624.6 432.3L624.7 437.0L624.9 441.7L625.0 446.4L625.1 451.2L625.2 455.9L625.2 460.6L625.2 465.4L625.2 470.1L625.2 474.9L625.2 479.7L625.1 484.4L625.0 489.2L624.9 494.0L624.7 498.8L624.6 503.7L624.4 508.5L624.2 513.4L605 460L300 460Z" fill="#6fc5d1" stroke="#2f4a6a" stroke-width="1.5" stroke-linejoin="round"/>
<polygon points="615.0,347.0 619.9,373.6 623.5,409.7 626.7,440.0 625.9,464.4 623.7,513.3 617.8,486.7 620.7,440.0 619.0,380.0" fill="#4e98a4" stroke="#2f4a6a" stroke-width="1.1" stroke-linejoin="round"/>
<polygon points="613.3,468.0 617.8,486.7 623.7,513.3 618.0,520.0" fill="#6fc5d1" stroke="#2f4a6a" stroke-width="0.8" stroke-linejoin="round"/>
<polygon points="719.6,620.7 719.6,641.1 672.4,668.0 669.6,620.7" fill="#2c3f84" stroke="#2f4a6a" stroke-width="1.2" stroke-linejoin="round"/>
<polygon points="669.6,620.7 719.6,620.7 672.4,652.0" fill="#3a52a4" stroke="#2f4a6a" stroke-width="1.2" stroke-linejoin="round"/>
<ellipse cx="732.5" cy="575.0" rx="9.0" ry="4.0" transform="rotate(0.0 732.5 575.0)" fill="#d7dbde" stroke="#2f4a6a" stroke-width="1.1"/>
<polygon points="674.3,566.1 723.3,575.4 674.3,589.3" fill="#3a52a4" stroke="#2f4a6a" stroke-width="1.2" stroke-linejoin="round"/>
<polygon points="719.0,619.0 739.2,619.0 739.2,627.0 719.0,627.0" fill="#a3142a" stroke="#2f4a6a" stroke-width="0.6" stroke-linejoin="round"/>
<polygon points="674.3,575.4 739.1,575.4 739.1,589.3 674.3,589.3" fill="#e01b2c" stroke="#2f4a6a" stroke-width="1.2" stroke-linejoin="round"/>
<polygon points="674.3,589.3 739.1,589.3 739.1,605.9 674.3,605.9" fill="#a3142a" stroke="#2f4a6a" stroke-width="1.2" stroke-linejoin="round"/>
<polygon points="676.0,578.0 723.3,575.4 692.0,589.0" fill="#3a52a4" stroke="#2f4a6a" stroke-width="0.8" stroke-linejoin="round"/>
<polygon points="671.5,605.9 739.1,605.9 739.1,620.7 671.5,620.7" fill="#e01b2c" stroke="#2f4a6a" stroke-width="1.2" stroke-linejoin="round"/>
<polygon points="718.7,637.0 718.8,636.5 719.0,635.9 719.4,635.4 720.0,634.9 720.7,634.4 721.5,634.0 722.5,633.7 723.5,633.4 724.7,633.1 725.9,632.9 727.1,632.8 728.4,632.8 729.7,632.8 730.9,632.9 732.1,633.1 733.2,633.4 734.3,633.7 735.3,634.0 736.1,634.4 736.8,634.9 737.4,635.4 737.8,635.9 738.0,636.5 738.1,637.0 738.1,677.0 738.0,677.5 737.8,678.1 737.4,678.6 736.8,679.1 736.1,679.6 735.3,680.0 734.3,680.3 733.2,680.6 732.1,680.9 730.9,681.1 729.7,681.2 728.4,681.2 727.1,681.2 725.9,681.1 724.7,680.9 723.5,680.6 722.5,680.3 721.5,680.0 720.7,679.6 720.0,679.1 719.4,678.6 719.0,678.1 718.8,677.5 718.7,677.0" fill="#c6cbcf" stroke="#2f4a6a" stroke-width="1.1" stroke-linejoin="round"/>
<ellipse cx="728.4" cy="677.0" rx="9.7" ry="4.2" transform="rotate(0.0 728.4 677.0)" fill="#d7dbde" stroke="#2f4a6a" stroke-width="1.1"/>
<path d="M739.2 575.8 H750 Q763.5 576.0 763.5 590.8 Q763.5 605.8 750 605.8 H739.2 Z" fill="#f0861e" stroke="#2f4a6a" stroke-width="1.2"/>
<path d="M739.2 590.0 Q753 590.5 762.8 597.0 Q762 605.8 750 605.8 H739.2 Z" fill="#cf6e1a" stroke="#2f4a6a" stroke-width="1.1"/>
<ellipse cx="729.6" cy="598.3" rx="10.4" ry="7.5" transform="rotate(0.0 729.6 598.3)" fill="#d9761c" stroke="#2f4a6a" stroke-width="1.1"/>
<ellipse cx="731.2" cy="597.6" rx="8.0" ry="4.2" transform="rotate(0.0 731.2 597.6)" fill="#4f4a33" stroke="#2f4a6a" stroke-width="0.8"/>
<path d="M739.2 606.8 H750 Q763.5 607.0 763.5 621.8 Q763.5 636.8 750 636.8 H739.2 Z" fill="#f0861e" stroke="#2f4a6a" stroke-width="1.2"/>
<path d="M739.2 621.0 Q753 621.5 762.8 628.0 Q762 636.8 750 636.8 H739.2 Z" fill="#cf6e1a" stroke="#2f4a6a" stroke-width="1.1"/>
<ellipse cx="729.6" cy="629.3" rx="10.4" ry="7.5" transform="rotate(0.0 729.6 629.3)" fill="#d9761c" stroke="#2f4a6a" stroke-width="1.1"/>
<ellipse cx="731.2" cy="628.6" rx="8.0" ry="4.2" transform="rotate(0.0 731.2 628.6)" fill="#4f4a33" stroke="#2f4a6a" stroke-width="0.8"/>
<polygon points="196.7,640.0 224.4,651.1 261.1,716.7 233.3,715.6 187.8,676.7" fill="#3a52a4" stroke="#2f4a6a" stroke-width="1.2" stroke-linejoin="round"/>
<polygon points="241.1,700.0 261.1,716.7 233.3,715.6 227.8,700.0" fill="#2c3f84" stroke="#2f4a6a" stroke-width="0.9" stroke-linejoin="round"/>
<polygon points="133.8,681.9 133.8,680.7 133.9,679.4 134.2,678.1 134.6,676.8 135.2,675.5 135.8,674.3 136.5,673.2 137.3,672.1 138.2,671.2 139.2,670.4 140.2,669.7 141.2,669.1 142.2,668.8 143.2,668.6 144.1,668.5 145.1,668.7 145.9,669.0 177.9,684.0 178.7,684.5 179.4,685.1 180.0,685.8 180.5,686.7 180.9,687.8 181.1,688.9 181.2,690.1 181.2,691.3 181.1,692.6 180.8,693.9 180.4,695.2 179.8,696.5 179.2,697.7 178.5,698.8 177.7,699.9 176.8,700.8 175.8,701.6 174.8,702.3 173.8,702.9 172.8,703.2 171.8,703.4 170.9,703.5 169.9,703.3 169.1,703.0 137.1,688.0 136.3,687.5 135.6,686.9 135.0,686.2 134.5,685.3 134.1,684.2 133.9,683.1" fill="#c6cbcf" stroke="#2f4a6a" stroke-width="1.2" stroke-linejoin="round"/>
<ellipse cx="141.5" cy="678.5" rx="7.0" ry="10.5" transform="rotate(25.0 141.5 678.5)" fill="#d7dbde" stroke="#2f4a6a" stroke-width="1.2"/>
<polygon points="178.9,692.2 225.6,652.2 229.0,655.5 196.7,692.2 190.0,697.8" fill="#e01b2c" stroke="#2f4a6a" stroke-width="1.2" stroke-linejoin="round"/>
<polygon points="190.0,697.8 229.0,655.5 238.9,666.1 207.8,702.0 201.0,713.0 185.0,706.0" fill="#a3142a" stroke="#2f4a6a" stroke-width="1.2" stroke-linejoin="round"/>
<polygon points="238.9,666.1 245.6,673.3 227.8,700.0 214.4,717.8 201.1,714.4 207.8,702.0" fill="#e01b2c" stroke="#2f4a6a" stroke-width="1.2" stroke-linejoin="round"/>
<polygon points="161.3,716.5 161.4,714.8 161.8,713.1 162.3,711.4 162.9,709.8 163.8,708.2 164.7,706.8 165.8,705.4 167.0,704.2 168.3,703.2 169.6,702.4 171.0,701.7 172.4,701.3 173.8,701.1 175.2,701.1 176.5,701.3 177.7,701.8 178.8,702.4 192.8,711.4 193.9,712.3 194.7,713.3 195.5,714.5 196.0,715.9 196.4,717.3 196.7,718.9 196.7,720.5 196.6,722.2 196.2,723.9 195.7,725.6 195.1,727.2 194.2,728.8 193.3,730.2 192.2,731.6 191.0,732.8 189.7,733.8 188.4,734.6 187.0,735.3 185.6,735.7 184.2,735.9 182.8,735.9 181.5,735.7 180.3,735.2 179.2,734.6 165.2,725.6 164.1,724.7 163.3,723.7 162.5,722.5 162.0,721.1 161.6,719.7 161.3,718.1" fill="#f0861e" stroke="#2f4a6a" stroke-width="1.2" stroke-linejoin="round"/>
<ellipse cx="186.0" cy="723.0" rx="10.0" ry="13.5" transform="rotate(25.0 186.0 723.0)" fill="#ad5c17" stroke="#2f4a6a" stroke-width="1.2"/>
<ellipse cx="196.0" cy="712.0" rx="5.0" ry="8.0" transform="rotate(30.0 196.0 712.0)" fill="#4f4a33" stroke="#2f4a6a" stroke-width="1"/>
<ellipse cx="236.0" cy="726.0" rx="5.5" ry="9.0" transform="rotate(30.0 236.0 726.0)" fill="#d7dbde" stroke="#2f4a6a" stroke-width="1"/>
<polygon points="192.8,729.5 192.9,727.8 193.3,726.0 193.8,724.3 194.5,722.6 195.3,720.9 196.3,719.4 197.5,718.0 198.7,716.8 200.1,715.8 201.5,714.9 202.9,714.2 204.4,713.8 205.8,713.6 207.3,713.6 208.6,713.8 209.9,714.3 211.1,715.0 225.1,724.0 226.2,724.9 227.1,726.0 227.9,727.2 228.5,728.6 228.9,730.2 229.2,731.8 229.2,733.5 229.1,735.2 228.7,737.0 228.2,738.7 227.5,740.4 226.7,742.1 225.7,743.6 224.5,745.0 223.3,746.2 221.9,747.2 220.5,748.1 219.1,748.8 217.6,749.2 216.2,749.4 214.7,749.4 213.4,749.2 212.1,748.7 210.9,748.0 196.9,739.0 195.8,738.1 194.9,737.0 194.1,735.8 193.5,734.4 193.1,732.8 192.8,731.2" fill="#f0861e" stroke="#2f4a6a" stroke-width="1.2" stroke-linejoin="round"/>
<ellipse cx="218.0" cy="736.0" rx="10.5" ry="14.0" transform="rotate(25.0 218.0 736.0)" fill="#ad5c17" stroke="#2f4a6a" stroke-width="1.2"/>
<ellipse cx="228.0" cy="722.0" rx="5.0" ry="8.5" transform="rotate(30.0 228.0 722.0)" fill="#4f4a33" stroke="#2f4a6a" stroke-width="1"/>
<polygon points="295.7,449.2 605.7,448.6 611.0,452.0 616.3,468.3 619.5,530.1 666.4,550.4 673.8,557.8 675.6,640.0 675.6,700.0 672.0,760.0 669.0,818.0 644.4,806.7 604.4,817.8 580.0,824.4 560.0,842.2 530.0,878.0 494.4,871.2 443.9,871.0 392.4,871.0 388.5,860.0 351.1,760.0 316.7,762.2 290.0,760.0 272.2,744.4 240.0,645.2 221.9,637.4 203.7,629.6 177.8,611.5 197.2,553.2 275.0,518.2" fill="#8e8d71" stroke="#2f4a6a" stroke-width="1.4" stroke-linejoin="round"/>
<polygon points="303.5,457.2 602.5,453.4 600.4,523.7 665.3,556.7 658.9,660.0 651.1,758.9 632.2,764.4 561.1,783.3 488.9,850.0 436.7,850.7 394.4,851.1 354.4,755.6 316.7,751.1 276.7,737.8 223.3,642.2 188.1,611.5 206.3,560.9 281.5,524.6" fill="#4d5b51" stroke="#2f4a6a" stroke-width="1.1" stroke-linejoin="round"/>
<polygon points="303.5,457.2 602.5,453.4 600.4,523.7 665.3,556.7 658.9,660.0 651.1,758.9 632.2,764.4 561.1,783.3 488.9,850.0 436.7,850.7 394.4,851.1 354.4,755.6 316.7,751.1 276.7,737.8 223.3,642.2 188.1,611.5 206.3,560.9 281.5,524.6" fill="url(#stripes2)" stroke="none" stroke-width="0" stroke-linejoin="round"/>
<polygon points="303.5,457.2 602.5,453.4 603.0,475.4 311.3,475.4" fill="#7b7a60" stroke="#2f4a6a" stroke-width="0.8" stroke-linejoin="round"/>
<polygon points="303.5,457.2 602.5,453.4 603.0,475.4 311.3,475.4" fill="url(#stripes2)" stroke="none" stroke-width="0" stroke-linejoin="round"/>
<polygon points="600.4,523.7 665.3,556.7 662.1,574.8 604.6,552.4" fill="#7e7d62" stroke="#2f4a6a" stroke-width="0.9" stroke-linejoin="round"/>
<polygon points="600.4,523.7 665.3,556.7 662.1,574.8 604.6,552.4" fill="url(#stripes2)" stroke="none" stroke-width="0" stroke-linejoin="round"/>
<polygon points="311.3,475.4 603.0,475.4 604.6,552.4 662.1,574.8 658.9,660.0 651.1,757.8 632.2,764.4 561.1,783.3 488.9,850.0 436.7,850.7 396.0,845.0 360.0,760.0 316.7,751.1 287.8,735.6 247.8,648.9 215.4,603.7 220.6,581.7 295.7,546.7" fill="#52625a" stroke="#2f4a6a" stroke-width="0.8" stroke-linejoin="round"/>
<g clip-path="url(#floorclip)">
<g filter="url(#blur8)">
<polygon points="222.0,640.0 300.0,600.0 420.0,566.0 540.0,540.0 615.0,524.0 600.0,562.0 500.0,602.0 380.0,652.0 280.0,702.0 236.0,706.0" fill="#7a7c64" stroke="none" stroke-width="0" stroke-linejoin="round" fill-opacity="0.85"/>
<polygon points="330.0,616.0 420.0,586.0 520.0,559.0 595.0,540.0 540.0,576.0 440.0,613.0 360.0,642.0" fill="#8e8c6e" stroke="none" stroke-width="0" stroke-linejoin="round" fill-opacity="0.85"/>
<polygon points="310.0,762.0 420.0,717.0 540.0,667.0 660.0,617.0 660.0,692.0 540.0,732.0 420.0,777.0 360.0,797.0" fill="#4a5952" stroke="none" stroke-width="0" stroke-linejoin="round" fill-opacity="0.85"/>
<polygon points="400.0,812.0 520.0,777.0 640.0,737.0 660.0,770.0 560.0,805.0 490.0,850.0 400.0,850.0" fill="#626d5d" stroke="none" stroke-width="0" stroke-linejoin="round" fill-opacity="0.75"/>
<polygon points="300.0,495.0 600.0,495.0 600.0,515.0 300.0,555.0" fill="#4d5c54" stroke="none" stroke-width="0" stroke-linejoin="round" fill-opacity="0.6"/>
</g>
<polygon points="311.3,475.4 603.0,475.4 604.6,552.4 662.1,574.8 658.9,660.0 651.1,757.8 632.2,764.4 561.1,783.3 488.9,850.0 436.7,850.7 396.0,845.0 360.0,760.0 316.7,751.1 287.8,735.6 247.8,648.9 215.4,603.7 220.6,581.7 295.7,546.7" fill="url(#stripes)" stroke="none" stroke-width="0" stroke-linejoin="round"/>
<polygon points="360.0,640.0 660.0,580.0 660.0,760.0 490.0,850.0 400.0,850.0 340.0,740.0" fill="url(#hlines)" stroke="none" stroke-width="0" stroke-linejoin="round"/>
<polygon points="311.3,475.4 603.0,475.4 603.5,494.8 307.0,494.8" fill="#3d6c70" stroke="none" stroke-width="0" stroke-linejoin="round" fill-opacity="0.95"/>
<polygon points="259.3,667.4 274.0,652.6 311.0,704.4 281.5,708.0" fill="#2d4c5d" stroke="#2d4c5d" stroke-width="0.6" stroke-linejoin="round" fill-opacity="0.9"/>
<polygon points="292.6,726.7 300.0,722.0 337.0,752.6 320.0,752.0" fill="#2d4c5d" stroke="#2d4c5d" stroke-width="0.6" stroke-linejoin="round" fill-opacity="0.9"/>
<polygon points="359.0,752.6 414.8,767.4 377.8,800.7 366.0,775.0" fill="#2d4c5d" stroke="#2d4c5d" stroke-width="0.6" stroke-linejoin="round" fill-opacity="0.9"/>
<polygon points="396.3,837.8 451.9,837.8 455.6,852.6 396.3,852.6" fill="#2d4c5d" stroke="#2d4c5d" stroke-width="0.6" stroke-linejoin="round" fill-opacity="0.9"/>
<polygon points="503.7,819.3 526.0,815.6 530.0,830.0 505.0,840.0" fill="#2d4c5d" stroke="#2d4c5d" stroke-width="0.6" stroke-linejoin="round" fill-opacity="0.9"/>
<polygon points="622.2,734.0 651.9,719.3 651.9,756.3 633.3,752.6" fill="#2d4c5d" stroke="#2d4c5d" stroke-width="0.6" stroke-linejoin="round" fill-opacity="0.9"/>
<polygon points="650.0,562.0 662.0,568.0 660.0,580.0" fill="#2d4c5d" stroke="#2d4c5d" stroke-width="0.6" stroke-linejoin="round" fill-opacity="0.9"/>
</g>
<polygon points="207.0,602.2 253.0,643.7 239.6,648.1 205.6,621.5" fill="#2d4c5d" stroke="#2d4c5d" stroke-width="0.6" stroke-linejoin="round" fill-opacity="0.9"/>
<polygon points="295.7,449.2 605.7,448.6 604.0,453.0 299.0,453.8" fill="#5f9aa3" stroke="#2f4a6a" stroke-width="0.9" stroke-linejoin="round"/>
<polygon points="299.0,453.8 604.0,453.0 602.5,457.0 303.5,458.0" fill="#a9a88b" stroke="#2f4a6a" stroke-width="0.7" stroke-linejoin="round"/>
<polygon points="605.7,448.6 611.0,452.0 604.0,524.0 600.4,523.7 602.5,457.0" fill="#b5b497" stroke="#2f4a6a" stroke-width="0.9" stroke-linejoin="round"/>
<polygon points="600.4,523.7 604.0,524.0 666.4,550.4 665.3,556.7" fill="#d3d4cc" stroke="#2f4a6a" stroke-width="0.9" stroke-linejoin="round"/>
<polygon points="665.3,556.7 673.8,557.8 666.0,640.0 659.0,766.7 651.1,758.9 658.9,660.0" fill="#b5b497" stroke="#2f4a6a" stroke-width="0.9" stroke-linejoin="round"/>
<polygon points="651.1,758.9 659.0,766.7 634.4,773.3 565.6,791.1 494.4,862.2 488.9,850.0 561.1,783.3 632.2,764.4" fill="#b5b497" stroke="#2f4a6a" stroke-width="0.9" stroke-linejoin="round"/>
<polygon points="393.3,851.1 436.1,851.1 436.1,861.8 392.4,862.0" fill="#b5b497" stroke="#2f4a6a" stroke-width="0.9" stroke-linejoin="round"/>
<polygon points="453.7,851.1 471.2,851.1 471.2,859.9 452.0,859.9" fill="#55645a" stroke="#2f4a6a" stroke-width="0.6" stroke-linejoin="round"/>
<polygon points="436.1,851.1 453.7,851.1 452.0,859.9 443.9,859.9" fill="#2d4c5d" stroke="#2f4a6a" stroke-width="0.7" stroke-linejoin="round"/>
<polygon points="436.1,851.1 443.9,859.9 443.9,870.6 436.1,862.8" fill="#8e8d71" stroke="#2f4a6a" stroke-width="0.8" stroke-linejoin="round"/>
<polygon points="443.9,859.9 471.2,859.9 476.0,870.6 443.9,870.6" fill="#b3b296" stroke="#2f4a6a" stroke-width="0.8" stroke-linejoin="round"/>
<polygon points="471.2,851.1 490.0,851.1 494.4,862.2 471.2,861.8" fill="#b5b497" stroke="#2f4a6a" stroke-width="0.9" stroke-linejoin="round"/>
<polygon points="351.1,760.0 354.4,755.6 394.4,851.1 391.1,858.9" fill="#b5b497" stroke="#2f4a6a" stroke-width="0.9" stroke-linejoin="round"/>
<polygon points="272.2,744.4 276.7,737.8 354.4,755.6 351.1,760.0 316.7,762.2 290.0,760.0" fill="#b5b497" stroke="#2f4a6a" stroke-width="0.9" stroke-linejoin="round"/>
<polygon points="316.0,751.0 330.0,753.0 330.0,762.0 316.7,762.2" fill="#8e8d71" stroke="#2f4a6a" stroke-width="0.7" stroke-linejoin="round"/>
<polygon points="177.8,611.5 188.1,611.5 223.3,642.2 276.7,737.8 272.2,744.4 240.0,645.2 221.9,637.4 203.7,629.6" fill="#b5b497" stroke="#2f4a6a" stroke-width="0.9" stroke-linejoin="round"/>
<polygon points="197.2,553.2 206.3,560.9 188.1,611.5 177.8,611.5" fill="#b5b497" stroke="#2f4a6a" stroke-width="0.9" stroke-linejoin="round"/>
<polygon points="278.2,521.4 281.5,524.6 206.3,560.9 201.8,557.0" fill="#b5b497" stroke="#2f4a6a" stroke-width="0.7" stroke-linejoin="round"/>
<polygon points="275.0,518.2 278.2,521.4 201.8,557.0 197.2,553.2" fill="#d0d1cc" stroke="#2f4a6a" stroke-width="0.9" stroke-linejoin="round"/>
<polygon points="295.7,449.2 303.5,458.0 281.5,524.6 275.0,518.2" fill="#a4a387" stroke="#2f4a6a" stroke-width="1.3" stroke-linejoin="round"/>
<polygon points="291.1,757.8 323.3,761.1 282.2,827.8" fill="#3a52a4" stroke="#2f4a6a" stroke-width="1.2" stroke-linejoin="round"/>
<polygon points="353.3,772.2 368.9,796.7 368.9,827.8 342.2,830.0 340.0,800.0" fill="#3a52a4" stroke="#2f4a6a" stroke-width="1.2" stroke-linejoin="round"/>
<polygon points="340.0,822.0 368.9,800.0 368.9,827.8 345.0,832.0" fill="#2c3f84" stroke="#2f4a6a" stroke-width="0.9" stroke-linejoin="round"/>
<polygon points="227.4,815.5 227.5,814.2 227.7,812.9 228.0,811.6 228.4,810.3 228.9,809.0 229.5,807.8 230.2,806.7 231.0,805.6 231.8,804.7 232.7,804.0 233.6,803.3 234.6,802.8 235.5,802.5 236.4,802.4 237.3,802.4 238.1,802.6 280.1,814.6 280.9,815.0 281.5,815.5 282.2,816.2 282.7,817.1 283.1,818.0 283.4,819.1 283.5,820.3 283.6,821.5 283.5,822.8 283.3,824.1 283.0,825.4 282.6,826.7 282.1,828.0 281.5,829.2 280.8,830.3 280.0,831.4 279.2,832.3 278.3,833.0 277.4,833.7 276.4,834.2 275.5,834.5 274.6,834.6 273.7,834.6 272.9,834.4 230.9,822.4 230.1,822.0 229.5,821.5 228.8,820.8 228.3,819.9 227.9,819.0 227.6,817.9 227.5,816.7" fill="#c6cbcf" stroke="#2f4a6a" stroke-width="1.2" stroke-linejoin="round"/>
<ellipse cx="234.5" cy="812.5" rx="6.5" ry="10.5" transform="rotate(20.0 234.5 812.5)" fill="#d7dbde" stroke="#2f4a6a" stroke-width="1.2"/>
<polygon points="322.2,765.6 326.7,768.9 297.8,823.3 286.7,822.2" fill="#e01b2c" stroke="#2f4a6a" stroke-width="1.2" stroke-linejoin="round"/>
<polygon points="326.7,768.9 338.9,782.2 317.8,822.2 297.8,823.3" fill="#a3142a" stroke="#2f4a6a" stroke-width="1.2" stroke-linejoin="round"/>
<polygon points="346.7,772.2 353.3,773.3 331.1,826.7 325.6,841.1 314.4,838.9 316.7,822.2" fill="#e01b2c" stroke="#2f4a6a" stroke-width="1.2" stroke-linejoin="round"/>
<polygon points="271.8,847.6 271.9,845.2 272.3,842.8 272.8,840.4 273.5,837.9 274.4,835.5 275.4,833.2 276.5,831.0 277.8,829.1 279.1,827.3 280.5,825.7 282.0,824.4 283.5,823.4 284.9,822.7 286.4,822.3 287.7,822.2 289.0,822.5 305.0,827.5 306.2,828.0 307.3,828.9 308.2,830.0 309.0,831.5 309.6,833.2 310.0,835.1 310.2,837.2 310.2,839.4 310.1,841.8 309.7,844.2 309.2,846.6 308.5,849.1 307.6,851.5 306.6,853.8 305.5,856.0 304.2,857.9 302.9,859.7 301.5,861.3 300.0,862.6 298.5,863.6 297.1,864.3 295.6,864.7 294.3,864.8 293.0,864.5 277.0,859.5 275.8,859.0 274.7,858.1 273.8,857.0 273.0,855.5 272.4,853.8 272.0,851.9 271.8,849.8" fill="#f0861e" stroke="#2f4a6a" stroke-width="1.2" stroke-linejoin="round"/>
<ellipse cx="299.0" cy="846.0" rx="10.0" ry="19.5" transform="rotate(18.0 299.0 846.0)" fill="#ad5c17" stroke="#2f4a6a" stroke-width="1.2"/>
<ellipse cx="304.5" cy="832.0" rx="5.0" ry="9.5" transform="rotate(22.0 304.5 832.0)" fill="#4f4a33" stroke="#2f4a6a" stroke-width="1"/>
<ellipse cx="353.5" cy="845.0" rx="5.5" ry="10.0" transform="rotate(20.0 353.5 845.0)" fill="#d7dbde" stroke="#2f4a6a" stroke-width="1"/>
<polygon points="307.8,854.6 307.9,852.2 308.3,849.8 308.8,847.4 309.5,844.9 310.4,842.5 311.4,840.2 312.5,838.0 313.8,836.1 315.1,834.3 316.5,832.7 318.0,831.4 319.5,830.4 320.9,829.7 322.4,829.3 323.7,829.2 325.0,829.5 341.0,834.5 342.2,835.0 343.3,835.9 344.2,837.0 345.0,838.5 345.6,840.2 346.0,842.1 346.2,844.2 346.2,846.4 346.1,848.8 345.7,851.2 345.2,853.6 344.5,856.1 343.6,858.5 342.6,860.8 341.5,863.0 340.2,864.9 338.9,866.7 337.5,868.3 336.0,869.6 334.5,870.6 333.1,871.3 331.6,871.7 330.3,871.8 329.0,871.5 313.0,866.5 311.8,866.0 310.7,865.1 309.8,864.0 309.0,862.5 308.4,860.8 308.0,858.9 307.8,856.8" fill="#f0861e" stroke="#2f4a6a" stroke-width="1.2" stroke-linejoin="round"/>
<ellipse cx="335.0" cy="853.0" rx="10.0" ry="19.5" transform="rotate(18.0 335.0 853.0)" fill="#ad5c17" stroke="#2f4a6a" stroke-width="1.2"/>
<ellipse cx="341.0" cy="839.0" rx="5.0" ry="9.5" transform="rotate(22.0 341.0 839.0)" fill="#4f4a33" stroke="#2f4a6a" stroke-width="1"/>
<polygon points="406.7,871.4 436.5,871.4 431.3,922.6 421.0,904.5" fill="#3a52a4" stroke="#2f4a6a" stroke-width="1.2" stroke-linejoin="round"/>
<polygon points="494.4,871.0 551.0,818.0 556.0,826.0 500.0,905.0" fill="#3a52a4" stroke="#2f4a6a" stroke-width="1.2" stroke-linejoin="round"/>
<polygon points="556.0,826.0 561.0,833.0 505.0,925.0 498.0,926.0 500.0,905.0" fill="#2c3f84" stroke="#2f4a6a" stroke-width="1.2" stroke-linejoin="round"/>
<polygon points="360.5,943.0 360.5,941.4 360.7,939.9 360.8,938.4 361.1,937.0 361.4,935.7 361.8,934.5 362.3,933.5 362.8,932.6 363.3,931.9 363.8,931.4 364.4,931.1 365.0,931.0 507.0,930.0 507.6,930.1 508.2,930.4 508.7,930.9 509.2,931.6 509.7,932.5 510.2,933.5 510.6,934.7 510.9,936.0 511.2,937.4 511.3,938.9 511.5,940.4 511.5,942.0 511.5,943.6 511.3,945.1 511.2,946.6 510.9,948.0 510.6,949.3 510.2,950.5 509.7,951.5 509.2,952.4 508.7,953.1 508.2,953.6 507.6,953.9 507.0,954.0 365.0,955.0 364.4,954.9 363.8,954.6 363.3,954.1 362.8,953.4 362.3,952.5 361.8,951.5 361.4,950.3 361.1,949.0 360.8,947.6 360.7,946.1 360.5,944.6" fill="#c6cbcf" stroke="#2f4a6a" stroke-width="1.2" stroke-linejoin="round"/>
<ellipse cx="365.0" cy="943.0" rx="4.5" ry="12.0" transform="rotate(0.0 365.0 943.0)" fill="#d7dbde" stroke="#2f4a6a" stroke-width="1.2"/>
<polygon points="456.0,866.9 478.0,871.4 474.1,892.8 463.8,885.0" fill="#9c9b80" stroke="#2f4a6a" stroke-width="0.9" stroke-linejoin="round"/>
<polygon points="436.5,871.4 443.0,867.5 431.3,922.6 428.0,915.0" fill="#d83040" stroke="#2f4a6a" stroke-width="0.8" stroke-linejoin="round"/>
<polygon points="443.0,867.5 456.0,866.9 445.6,927.8 435.2,947.3 423.6,947.3 431.3,922.6" fill="#e01b2c" stroke="#2f4a6a" stroke-width="1.2" stroke-linejoin="round"/>
<polygon points="456.0,872.7 463.8,885.0 453.4,933.0 445.6,927.8" fill="#a3142a" stroke="#2f4a6a" stroke-width="1.2" stroke-linejoin="round"/>
<polygon points="478.0,871.4 493.6,871.4 488.4,914.9 484.5,947.3 467.7,947.3" fill="#e01b2c" stroke="#2f4a6a" stroke-width="1.2" stroke-linejoin="round"/>
<polygon points="423.6,947.3 444.3,947.3 444.3,981.0 427.4,982.3 422.3,966.7" fill="#f0861e" stroke="#2f4a6a" stroke-width="1.2" stroke-linejoin="round"/>
<ellipse cx="447.5" cy="954.0" rx="6.5" ry="27.0" transform="rotate(6.0 447.5 954.0)" fill="#ad5c17" stroke="#2f4a6a" stroke-width="1.2"/>
<ellipse cx="449.5" cy="941.0" rx="3.5" ry="10.0" transform="rotate(6.0 449.5 941.0)" fill="#4f4a33" stroke="#2f4a6a" stroke-width="1"/>
<polygon points="467.7,947.3 486.5,947.3 486.5,981.0 469.0,981.0 465.1,966.7" fill="#f0861e" stroke="#2f4a6a" stroke-width="1.2" stroke-linejoin="round"/>
<ellipse cx="491.0" cy="954.0" rx="6.5" ry="27.0" transform="rotate(6.0 491.0 954.0)" fill="#ad5c17" stroke="#2f4a6a" stroke-width="1.2"/>
<ellipse cx="492.5" cy="941.0" rx="3.5" ry="10.0" transform="rotate(6.0 492.5 941.0)" fill="#4f4a33" stroke="#2f4a6a" stroke-width="1"/>
<polygon points="550.7,877.2 550.7,875.8 550.8,874.5 551.1,873.4 551.3,872.4 551.7,871.6 552.2,870.9 552.6,870.5 553.2,870.3 683.2,842.3 683.8,842.3 684.4,842.4 685.1,842.8 685.8,843.4 686.4,844.2 687.1,845.2 687.7,846.3 688.3,847.6 688.9,849.0 689.4,850.4 689.8,852.0 690.2,853.6 690.5,855.2 690.7,856.8 690.9,858.3 690.9,859.8 690.9,861.2 690.8,862.5 690.5,863.6 690.3,864.6 689.9,865.4 689.4,866.1 689.0,866.5 688.4,866.7 558.4,894.7 557.8,894.7 557.2,894.6 556.5,894.2 555.8,893.6 555.2,892.8 554.5,891.8 553.9,890.7 553.3,889.4 552.7,888.0 552.2,886.6 551.8,885.0 551.4,883.4 551.1,881.8 550.9,880.2 550.7,878.7" fill="#c6cbcf" stroke="#2f4a6a" stroke-width="1.2" stroke-linejoin="round"/>
<ellipse cx="555.8" cy="882.5" rx="4.5" ry="12.5" transform="rotate(-12.0 555.8 882.5)" fill="#d7dbde" stroke="#2f4a6a" stroke-width="1.2"/>
<polygon points="581.1,798.9 601.1,793.3 603.3,820.0 585.6,813.3" fill="#3a52a4" stroke="#2f4a6a" stroke-width="0.9" stroke-linejoin="round"/>
<polygon points="663.3,715.6 668.9,733.3 668.9,817.8 663.3,804.4" fill="#3a52a4" stroke="#2f4a6a" stroke-width="0.9" stroke-linejoin="round"/>
<polygon points="605.6,780.0 615.6,780.0 631.1,868.9 614.4,871.1 601.1,793.3" fill="#e01b2c" stroke="#2f4a6a" stroke-width="1.2" stroke-linejoin="round"/>
<polygon points="620.0,795.0 624.0,800.0 631.1,868.9 627.0,869.0" fill="#a3142a" stroke="#2f4a6a" stroke-width="0.7" stroke-linejoin="round"/>
<polygon points="614.4,871.1 631.1,868.9 638.9,900.0 622.2,904.4" fill="#f0861e" stroke="#2f4a6a" stroke-width="1.2" stroke-linejoin="round"/>
<polygon points="641.1,780.0 657.8,775.6 671.1,857.8 655.6,861.1" fill="#e01b2c" stroke="#2f4a6a" stroke-width="1.2" stroke-linejoin="round"/>
<line x1="642" y1="782" x2="664" y2="822" stroke="#2f4a6a" stroke-width="1"/>
<polygon points="655.6,861.1 671.1,857.8 680.0,888.9 662.2,894.4" fill="#f0861e" stroke="#2f4a6a" stroke-width="1.2" stroke-linejoin="round"/>
<polygon points="605.6,768.9 614.4,768.9 614.4,780.0 605.6,780.0" fill="#8a2a30" stroke="#2f4a6a" stroke-width="0.6" stroke-linejoin="round"/>
</g>
<g id="rightmodel">
<polygon points="829.5,825.4 829.5,857.0 881.6,877.8 883.5,887.3 931.0,881.6 988.8,975.0 999.3,954.0 1069.6,954.0 1087.3,922.2 988.8,923.2 918.4,852.1" fill="#92c2c8" stroke="#2f4a6a" stroke-width="1.3" stroke-linejoin="round"/>
<polygon points="1131.9,821.5 1213.9,800.0 1197.2,826.4 1168.0,831.0 1151.4,847.2 1140.0,838.0" fill="#92c2c8" stroke="#2f4a6a" stroke-width="1.3" stroke-linejoin="round"/>
<polygon points="1252.6,704.0 1317.6,668.1 1297.8,695.7 1289.4,689.4 1279.7,695.7 1267.9,711.7 1264.0,722.0 1250.0,712.0" fill="#92c2c8" stroke="#2f4a6a" stroke-width="1.3" stroke-linejoin="round"/>
<ellipse cx="866.4" cy="861.8" rx="13.0" ry="6.0" transform="rotate(10.0 866.4 861.8)" fill="#a8dfe6" stroke="#2f4a6a" stroke-width="1.1"/>
<ellipse cx="1012.6" cy="944.1" rx="13.0" ry="5.5" transform="rotate(0.0 1012.6 944.1)" fill="#a8dfe6" stroke="#2f4a6a" stroke-width="1.1"/>
<ellipse cx="1152.8" cy="835.4" rx="7.0" ry="4.0" transform="rotate(-10.0 1152.8 835.4)" fill="#a8dfe6" stroke="#2f4a6a" stroke-width="1.1"/>
<polygon points="849.5,838.7 852.0,842.0 832.0,958.0 829.5,957.3" fill="#92c2c8" stroke="#2f4a6a" stroke-width="1.0" stroke-linejoin="round"/>
<polygon points="834.6,835.7 849.5,838.7 829.5,957.3 813.2,955.1" fill="#a8dfe6" stroke="#2f4a6a" stroke-width="1.3" stroke-linejoin="round"/>
<polygon points="887.3,851.3 902.8,856.5 883.5,884.6" fill="#a8dfe6" stroke="#2f4a6a" stroke-width="1.2" stroke-linejoin="round"/>
<polygon points="896.9,886.1 932.5,881.7 931.7,890.6 897.6,898.0" fill="#92c2c8" stroke="#2f4a6a" stroke-width="1.2" stroke-linejoin="round"/>
<polygon points="920.6,895.0 931.7,890.6 988.8,975.1 982.9,975.1" fill="#92c2c8" stroke="#2f4a6a" stroke-width="1.2" stroke-linejoin="round"/>
<polygon points="931.7,890.6 932.5,881.7 989.0,940.0 988.8,975.1" fill="#a8dfe6" stroke="#2f4a6a" stroke-width="1.2" stroke-linejoin="round"/>
<polygon points="882.8,886.9 896.9,886.1 886.5,968.4 869.5,964.7" fill="#a8dfe6" stroke="#2f4a6a" stroke-width="1.3" stroke-linejoin="round"/>
<polygon points="960.0,928.1 960.0,948.9 979.2,977.0 986.7,974.0 986.0,930.0" fill="#92c2c8" stroke="#2f4a6a" stroke-width="1.1" stroke-linejoin="round"/>
<polygon points="979.2,977.0 985.2,974.0 986.7,1052.5 981.0,1030.0" fill="#92c2c8" stroke="#2f4a6a" stroke-width="1.1" stroke-linejoin="round"/>
<polygon points="984.4,928.9 996.3,929.6 1005.9,1051.0 986.7,1052.5 985.2,974.0" fill="#a8dfe6" stroke="#2f4a6a" stroke-width="1.3" stroke-linejoin="round"/>
<ellipse cx="985.2" cy="1021.4" rx="4.0" ry="26.0" transform="rotate(-2.0 985.2 1021.4)" fill="#92c2c8" stroke="#2f4a6a" stroke-width="1.1"/>
<ellipse cx="985.9" cy="1022.9" rx="1.8" ry="9.0" transform="rotate(-2.0 985.9 1022.9)" fill="#a8dfe6" stroke="#2f4a6a" stroke-width="1"/>
<polygon points="1031.8,941.5 1037.0,929.6 1045.9,1051.8 1038.5,996.2" fill="#92c2c8" stroke="#2f4a6a" stroke-width="1.1" stroke-linejoin="round"/>
<polygon points="1037.0,929.6 1054.8,929.6 1066.6,1051.0 1045.9,1051.8" fill="#a8dfe6" stroke="#2f4a6a" stroke-width="1.3" stroke-linejoin="round"/>
<ellipse cx="1042.9" cy="1022.9" rx="5.5" ry="28.0" transform="rotate(-3.0 1042.9 1022.9)" fill="#92c2c8" stroke="#2f4a6a" stroke-width="1.1"/>
<ellipse cx="1043.3" cy="1023.5" rx="2.2" ry="9.0" transform="rotate(-3.0 1043.3 1023.5)" fill="#a8dfe6" stroke="#2f4a6a" stroke-width="1"/>
<polygon points="1109.7,875.0 1116.7,861.1 1145.8,881.9 1137.5,892.4" fill="#92c2c8" stroke="#2f4a6a" stroke-width="1.2" stroke-linejoin="round"/>
<polygon points="1116.7,859.7 1129.9,831.3 1154.2,884.7 1145.8,881.9" fill="#a8dfe6" stroke="#2f4a6a" stroke-width="1.2" stroke-linejoin="round"/>
<polygon points="1129.9,831.3 1141.7,826.4 1174.1,906.1 1175.3,909.2 1176.4,912.4 1177.3,915.6 1177.9,918.8 1178.3,921.8 1178.6,924.7 1178.5,927.4 1178.3,929.9 1177.8,932.0 1177.1,933.9 1176.2,935.4 1175.1,936.5 1173.8,937.2 1172.4,937.4 1170.8,937.3 1169.2,936.8 1167.4,935.8 1165.7,934.4 1163.9,932.7 1162.2,930.7 1160.4,928.3 1158.8,925.7 1157.3,922.9 1155.9,919.9 1154.7,916.8 1153.6,913.6" fill="#a8dfe6" stroke="#2f4a6a" stroke-width="1.2" stroke-linejoin="round"/>
<polygon points="1137.5,892.4 1145.8,881.9 1157.6,901.9 1159.1,904.7 1160.5,907.7 1161.7,910.8 1162.8,914.0 1163.7,917.2 1164.3,920.4 1164.7,923.4 1165.0,926.3 1164.9,929.0 1164.7,931.5 1164.2,933.6 1163.5,935.5 1162.6,937.0 1161.5,938.1 1160.2,938.8 1158.8,939.0 1157.2,938.9 1155.6,938.4 1153.8,937.4 1152.1,936.0 1150.3,934.3 1148.6,932.3 1146.8,929.9 1145.2,927.3 1143.7,924.5 1142.3,921.5 1141.1,918.4 1140.0,915.2 1139.1,912.0 1138.5,908.8 1138.1,905.8 1137.8,902.9" fill="#92c2c8" stroke="#2f4a6a" stroke-width="1.2" stroke-linejoin="round"/>
<ellipse cx="1151.4" cy="914.6" rx="11.0" ry="25.7" transform="rotate(-20.0 1151.4 914.6)" fill="#92c2c8" stroke="#2f4a6a" stroke-width="1.2"/>
<ellipse cx="1152.0" cy="913.9" rx="4.0" ry="9.0" transform="rotate(-20.0 1152.0 913.9)" fill="#a8dfe6" stroke="#2f4a6a" stroke-width="1.1"/>
<polygon points="1177.8,816.7 1191.7,812.5 1225.6,893.9 1226.8,897.1 1227.9,900.3 1228.7,903.5 1229.3,906.6 1229.8,909.7 1229.9,912.6 1229.9,915.3 1229.6,917.8 1229.0,919.9 1228.3,921.8 1227.3,923.3 1226.1,924.4 1224.8,925.2 1223.3,925.5 1221.7,925.3 1220.0,924.8 1218.2,923.9 1216.4,922.6 1214.6,920.9 1212.8,918.8 1211.0,916.5 1209.4,913.9 1207.8,911.0 1206.4,908.1 1205.2,904.9 1204.1,901.7" fill="#a8dfe6" stroke="#2f4a6a" stroke-width="1.2" stroke-linejoin="round"/>
<polygon points="1168.1,830.6 1177.8,816.7 1214.5,896.4 1215.7,899.6 1216.8,902.8 1217.6,906.0 1218.2,909.1 1218.7,912.2 1218.8,915.1 1218.8,917.8 1218.5,920.3 1217.9,922.4 1217.2,924.3 1216.2,925.8 1215.0,926.9 1213.7,927.7 1212.2,928.0 1210.6,927.8 1208.9,927.3 1207.1,926.4 1205.3,925.1 1203.5,923.4 1201.7,921.3 1199.9,919.0 1198.3,916.4 1196.7,913.5 1195.3,910.6 1194.1,907.4" fill="#92c2c8" stroke="#2f4a6a" stroke-width="1.2" stroke-linejoin="round"/>
<ellipse cx="1204.9" cy="903.5" rx="11.5" ry="25.7" transform="rotate(-20.0 1204.9 903.5)" fill="#92c2c8" stroke="#2f4a6a" stroke-width="1.2"/>
<ellipse cx="1204.2" cy="902.1" rx="4.5" ry="9.0" transform="rotate(-20.0 1204.2 902.1)" fill="#a8dfe6" stroke="#2f4a6a" stroke-width="1.1"/>
<polygon points="1236.0,749.2 1270.0,752.0 1260.3,765.8 1230.4,765.1" fill="#92c2c8" stroke="#2f4a6a" stroke-width="1.2" stroke-linejoin="round"/>
<polygon points="1246.4,722.8 1281.1,749.9 1236.0,749.2" fill="#a8dfe6" stroke="#2f4a6a" stroke-width="1.2" stroke-linejoin="round"/>
<polygon points="1247.8,721.4 1251.9,715.1 1316.4,776.5 1317.9,778.1 1319.1,779.9 1320.1,781.8 1320.9,783.7 1321.4,785.7 1321.7,787.7 1321.7,789.6 1321.5,791.4 1320.9,793.2 1320.1,794.8 1319.1,796.2 1317.9,797.5 1316.4,798.5 1314.8,799.4 1313.0,799.9 1311.1,800.3 1309.2,800.3 1307.1,800.2 1305.1,799.7 1303.1,799.0 1301.1,798.1 1299.2,797.0 1297.4,795.6 1295.8,794.1 1294.3,792.5 1293.1,790.7" fill="#a8dfe6" stroke="#2f4a6a" stroke-width="1.2" stroke-linejoin="round"/>
<polygon points="1260.3,765.8 1270.0,751.9 1303.7,779.1 1305.3,780.6 1306.8,782.2 1308.0,784.0 1309.0,785.9 1309.8,787.8 1310.3,789.8 1310.6,791.8 1310.6,793.7 1310.4,795.5 1309.8,797.3 1309.0,798.9 1308.0,800.3 1306.8,801.6 1305.3,802.6 1303.7,803.5 1301.9,804.0 1300.0,804.4 1298.1,804.4 1296.0,804.3 1294.0,803.8 1292.0,803.1 1290.0,802.2 1288.1,801.1 1286.3,799.7 1284.7,798.2 1283.2,796.6" fill="#92c2c8" stroke="#2f4a6a" stroke-width="1.2" stroke-linejoin="round"/>
<ellipse cx="1295.0" cy="789.4" rx="17.0" ry="13.5" transform="rotate(40.0 1295.0 789.4)" fill="#92c2c8" stroke="#2f4a6a" stroke-width="1.2"/>
<ellipse cx="1295.7" cy="788.8" rx="6.0" ry="5.0" transform="rotate(40.0 1295.7 788.8)" fill="#a8dfe6" stroke="#2f4a6a" stroke-width="1.1"/>
<polygon points="1279.7,695.7 1289.4,689.4 1350.0,748.4 1351.5,750.1 1352.8,751.9 1353.8,753.9 1354.6,755.9 1355.1,757.9 1355.4,759.9 1355.4,761.9 1355.1,763.8 1354.6,765.5 1353.8,767.2 1352.7,768.7 1351.4,770.0 1350.0,771.1 1348.3,771.9 1346.5,772.5 1344.5,772.9 1342.5,772.9 1340.4,772.8 1338.3,772.3 1336.2,771.6 1334.2,770.7 1332.3,769.5 1330.5,768.1 1328.8,766.6 1327.3,764.9 1326.0,763.1" fill="#a8dfe6" stroke="#2f4a6a" stroke-width="1.2" stroke-linejoin="round"/>
<polygon points="1267.9,711.7 1279.7,695.7 1340.3,752.6 1341.8,754.3 1343.1,756.1 1344.1,758.1 1344.9,760.1 1345.4,762.1 1345.7,764.1 1345.7,766.1 1345.4,768.0 1344.9,769.7 1344.1,771.4 1343.0,772.9 1341.7,774.2 1340.3,775.3 1338.6,776.1 1336.8,776.7 1334.8,777.1 1332.8,777.1 1330.7,777.0 1328.6,776.5 1326.5,775.8 1324.5,774.9 1322.6,773.7 1320.8,772.3 1319.1,770.8 1317.6,769.1" fill="#92c2c8" stroke="#2f4a6a" stroke-width="1.2" stroke-linejoin="round"/>
<ellipse cx="1329.7" cy="761.7" rx="17.4" ry="13.9" transform="rotate(40.0 1329.7 761.7)" fill="#92c2c8" stroke="#2f4a6a" stroke-width="1.2"/>
<ellipse cx="1331.8" cy="761.0" rx="6.5" ry="5.0" transform="rotate(40.0 1331.8 761.0)" fill="#a8dfe6" stroke="#2f4a6a" stroke-width="1.1"/>
<path d="M892.3 516.5L892.6 511.1L892.9 505.8L893.1 500.3L893.4 494.9L893.6 489.5L893.7 484.1L893.9 478.7L894.0 473.2L894.2 467.8L894.3 462.3L894.4 456.9L894.5 451.4L894.6 446.0L894.7 440.5L894.9 435.1L895.0 429.6L895.1 424.2L895.3 418.7L895.4 413.2L895.6 407.8L895.8 402.3L896.1 396.9L896.3 391.4L896.6 386.0L897.0 380.5L897.3 375.1L897.8 369.7L898.2 364.2L898.7 358.8L899.3 353.4L899.9 348.0L900.5 342.6L901.2 337.2L902.0 331.9L902.9 326.5L903.8 321.1L904.7 315.8L905.8 310.5L906.9 305.1L908.1 299.8L909.4 294.5L910.8 289.2L912.2 284.0L913.8 278.7L915.4 273.5L917.2 268.3L919.0 263.1L921.0 257.9L923.0 252.7L925.2 247.5L927.4 242.4L929.8 237.3L932.3 232.2L934.9 227.2L937.7 222.2L940.6 217.4L943.6 212.6L946.8 208.0L950.1 203.7L953.6 199.5L957.3 195.5L961.1 191.9L965.1 188.5L969.3 185.4L973.7 182.7L978.3 180.3L983.0 178.3L987.8 176.7L992.8 175.4L997.8 174.5L1002.9 174.0L1008.0 173.9L1013.2 174.2L1018.3 174.9L1023.5 176.0L1028.6 177.5L1033.6 179.3L1038.6 181.5L1043.5 183.9L1048.3 186.6L1053.1 189.5L1057.7 192.7L1062.2 196.0L1066.6 199.5L1070.8 203.2L1074.9 207.0L1078.8 210.9L1082.7 214.9L1086.3 219.0L1089.9 223.2L1093.4 227.5L1096.7 231.9L1100.0 236.3L1103.1 240.9L1106.2 245.4L1109.2 250.0L1112.2 254.7L1115.1 259.4L1117.9 264.1L1120.7 268.9L1123.5 273.6L1126.2 278.4L1128.9 283.2L1131.5 288.0L1134.2 292.8L1136.8 297.6L1139.3 302.4L1141.8 307.2L1144.3 312.1L1146.8 317.0L1149.2 321.8L1151.5 326.7L1153.9 331.6L1156.2 336.6L1158.5 341.5L1160.7 346.4L1162.9 351.4L1165.1 356.3L1167.2 361.3L1169.3 366.3L1171.4 371.3L1173.5 376.3L1175.5 381.4L1177.4 386.4L1179.4 391.5L1181.3 396.5L1183.1 401.6L1185.0 406.7L1186.8 411.8L1188.5 416.9L1190.3 422.1L1192.0 427.2L1193.6 432.4L1195.3 437.5L1196.8 442.7L1198.4 447.9L1199.9 453.1L1201.4 458.3L1202.9 463.6L1204.3 468.8L1205.7 474.1L1207.1 479.3L1208.4 484.6L1209.7 489.9L1211.0 495.2L1212.2 500.6L1213.4 505.9L1214.6 511.3L1215.7 516.6L1216.8 522.0L1217.9 527.4L1218.9 532.8L1219.9 538.2L1220.9 543.6L1221.8 549.1L1222.7 554.5L1223.6 560.0L1224.4 565.5L1225.2 571.0L1302.4 609.1L1317.6 668.1L1252.6 704L1216.7 800L1213.9 800L1131.9 821.5L1085 923.3L988.8 923.2L918.4 852.1L829.5 825.4L826.9 611.8L898.7 579.9Z" fill="#a9dee4" stroke="#2f4a6a" stroke-width="1.6" stroke-linejoin="round"/>
<path d="M893.5 502 L896 502.5" stroke="#2f4a6a" stroke-width="1.2"/>
<polygon points="929.4,312.5 1125.0,311.5 1128.5,316.0 928.4,317.0" fill="#8fc3ca" stroke="#2f4a6a" stroke-width="1.1" stroke-linejoin="round"/>
<line x1="928.4" y1="317.0" x2="1128.5" y2="316.0" stroke="#2f4a6a" stroke-width="1.7"/>
<line x1="1125.0" y1="311.5" x2="1123.5" y2="316.0" stroke="#2f4a6a" stroke-width="0.9"/>
<polygon points="931.0,333.5 1131.0,332.5 1134.5,337.0 930.0,338.0" fill="#8fc3ca" stroke="#2f4a6a" stroke-width="1.1" stroke-linejoin="round"/>
<line x1="930.0" y1="338.0" x2="1134.5" y2="337.0" stroke="#2f4a6a" stroke-width="1.7"/>
<line x1="1131.0" y1="332.5" x2="1129.5" y2="337.0" stroke="#2f4a6a" stroke-width="0.9"/>
<polygon points="935.0,384.5 1142.0,383.5 1145.5,389.0 934.0,390.0" fill="#8fc3ca" stroke="#2f4a6a" stroke-width="1.1" stroke-linejoin="round"/>
<line x1="934.0" y1="390.0" x2="1145.5" y2="389.0" stroke="#2f4a6a" stroke-width="1.7"/>
<line x1="1142.0" y1="383.5" x2="1140.5" y2="389.0" stroke="#2f4a6a" stroke-width="0.9"/>
<polygon points="937.0,407.5 1145.0,406.5 1148.5,411.0 936.0,412.0" fill="#8fc3ca" stroke="#2f4a6a" stroke-width="1.1" stroke-linejoin="round"/>
<line x1="936.0" y1="412.0" x2="1148.5" y2="411.0" stroke="#2f4a6a" stroke-width="1.7"/>
<line x1="1145.0" y1="406.5" x2="1143.5" y2="411.0" stroke="#2f4a6a" stroke-width="0.9"/>
<polygon points="941.5,463.0 1157.0,462.0 1160.5,468.5 940.5,469.5" fill="#8fc3ca" stroke="#2f4a6a" stroke-width="1.1" stroke-linejoin="round"/>
<line x1="940.5" y1="469.5" x2="1160.5" y2="468.5" stroke="#2f4a6a" stroke-width="1.7"/>
<line x1="1157.0" y1="462.0" x2="1155.5" y2="468.5" stroke="#2f4a6a" stroke-width="0.9"/>
<polygon points="944.0,488.2 1162.0,487.2 1165.5,494.0 943.0,495.0" fill="#8fc3ca" stroke="#2f4a6a" stroke-width="1.1" stroke-linejoin="round"/>
<line x1="943.0" y1="495.0" x2="1165.5" y2="494.0" stroke="#2f4a6a" stroke-width="1.7"/>
<line x1="1162.0" y1="487.2" x2="1160.5" y2="494.0" stroke="#2f4a6a" stroke-width="0.9"/>
<polygon points="950.0,569.1 1179.0,568.1 1182.5,575.0 949.0,576.0" fill="#8fc3ca" stroke="#2f4a6a" stroke-width="1.1" stroke-linejoin="round"/>
<line x1="949.0" y1="576.0" x2="1182.5" y2="575.0" stroke="#2f4a6a" stroke-width="1.7"/>
<line x1="1179.0" y1="568.1" x2="1177.5" y2="575.0" stroke="#2f4a6a" stroke-width="0.9"/>
<polygon points="952.3,597.5 1185.8,596.5 1189.3,603.0 951.3,604.0" fill="#8fc3ca" stroke="#2f4a6a" stroke-width="1.1" stroke-linejoin="round"/>
<line x1="951.3" y1="604.0" x2="1189.3" y2="603.0" stroke="#2f4a6a" stroke-width="1.7"/>
<line x1="1185.8" y1="596.5" x2="1184.3" y2="603.0" stroke="#2f4a6a" stroke-width="0.9"/>
<polygon points="873.4,639.5 878.4,630.2 890.1,630.8 898.4,640.0 893.9,648.8 881.6,648.8" fill="#a9dee4" stroke="#2f4a6a" stroke-width="1.5" stroke-linejoin="round"/>
<polygon points="873.4,639.5 878.4,630.2 890.1,630.8 885.7,639.0" fill="#92c2c8" stroke="#2f4a6a" stroke-width="1.1" stroke-linejoin="round"/>
<polygon points="890.1,630.8 898.4,640.0 893.9,648.8 885.7,639.0" fill="#92c2c8" stroke="#2f4a6a" stroke-width="1.1" stroke-linejoin="round"/>
<polygon points="1256.2,626.0 1261.2,616.0 1273.0,616.5 1281.2,626.5 1276.7,636.0 1264.5,636.0" fill="#a9dee4" stroke="#2f4a6a" stroke-width="1.5" stroke-linejoin="round"/>
<polygon points="1256.2,626.0 1261.2,616.0 1273.0,616.5 1268.5,625.5" fill="#92c2c8" stroke="#2f4a6a" stroke-width="1.1" stroke-linejoin="round"/>
<polygon points="1273.0,616.5 1281.2,626.5 1276.7,636.0 1268.5,625.5" fill="#92c2c8" stroke="#2f4a6a" stroke-width="1.1" stroke-linejoin="round"/>
<polygon points="946.5,836.0 951.7,826.0 963.9,826.5 972.5,836.5 967.8,846.0 955.1,846.0" fill="#a9dee4" stroke="#2f4a6a" stroke-width="1.5" stroke-linejoin="round"/>
<polygon points="946.5,836.0 951.7,826.0 963.9,826.5 959.3,835.5" fill="#92c2c8" stroke="#2f4a6a" stroke-width="1.1" stroke-linejoin="round"/>
<polygon points="963.9,826.5 972.5,836.5 967.8,846.0 959.3,835.5" fill="#92c2c8" stroke="#2f4a6a" stroke-width="1.1" stroke-linejoin="round"/>
<polygon points="1071.7,819.0 1076.9,809.0 1089.1,809.5 1097.7,819.5 1093.0,829.0 1080.3,829.0" fill="#a9dee4" stroke="#2f4a6a" stroke-width="1.5" stroke-linejoin="round"/>
<polygon points="1071.7,819.0 1076.9,809.0 1089.1,809.5 1084.5,818.5" fill="#92c2c8" stroke="#2f4a6a" stroke-width="1.1" stroke-linejoin="round"/>
<polygon points="1089.1,809.5 1097.7,819.5 1093.0,829.0 1084.5,818.5" fill="#92c2c8" stroke="#2f4a6a" stroke-width="1.1" stroke-linejoin="round"/>
<polygon points="1180.4,739.8 1185.8,729.6 1198.5,730.1 1207.4,740.3 1202.5,750.0 1189.3,750.0" fill="#a9dee4" stroke="#2f4a6a" stroke-width="1.5" stroke-linejoin="round"/>
<polygon points="1180.4,739.8 1185.8,729.6 1198.5,730.1 1193.7,739.3" fill="#92c2c8" stroke="#2f4a6a" stroke-width="1.1" stroke-linejoin="round"/>
<polygon points="1198.5,730.1 1207.4,740.3 1202.5,750.0 1193.7,739.3" fill="#92c2c8" stroke="#2f4a6a" stroke-width="1.1" stroke-linejoin="round"/>
</g>

</svg>
<div id="hdr">
 <svg width="48" height="48" style="position:absolute;left:0;top:0">
  <rect x="2.2" y="2" width="13.3" height="13.4" fill="#ee4b2b"/>
  <rect x="17.1" y="2" width="13.6" height="13.4" fill="#f47c38"/>
  <rect x="32.2" y="2" width="13" height="13.4" fill="#f79a3c"/>
  <rect x="2.2" y="17.1" width="13.3" height="13.4" fill="#2fae50"/>
  <rect x="17.1" y="17.1" width="13.6" height="13.4" fill="#86c21f"/>
  <rect x="32.2" y="17.1" width="13" height="13.4" fill="#c8cf3c"/>
  <rect x="2.2" y="32.2" width="13.3" height="13.3" fill="#0f64b1"/>
  <rect x="17.1" y="32.2" width="13.6" height="13.3" fill="#4193cd"/>
  <rect x="32.2" y="32.2" width="13" height="13.3" fill="#6db8df"/>
  <g fill="#fff" font-family="Liberation Sans" font-weight="bold" font-size="12.5" text-anchor="middle">
   <text x="8.9" y="13.6">T</text><text x="23.9" y="13.6">I</text><text x="38.7" y="13.6">N</text>
   <text x="8.9" y="28.7">K</text><text x="23.9" y="28.7">E</text><text x="38.7" y="28.7">R</text>
   <text x="8.9" y="43.7">C</text><text x="23.9" y="43.7">A</text><text x="38.7" y="43.7">D</text>
  </g>
 </svg>
 <svg width="30" height="30" style="position:absolute;left:56px;top:9px">
  <rect x="4" y="4.6" width="21" height="19.2" rx="1.6" fill="#fff" stroke="#1e1e1e" stroke-width="1.8"/>
  <rect x="4" y="3.7" width="21" height="2.6" fill="#1e1e1e"/>
  <rect x="8.2" y="9.8" width="1.9" height="1.9" fill="#000"/><rect x="12" y="9.8" width="9" height="1.9" fill="#000"/>
  <rect x="8.2" y="13.8" width="1.9" height="1.9" fill="#000"/><rect x="12" y="13.8" width="9" height="1.9" fill="#000"/>
  <rect x="8.2" y="17.7" width="1.9" height="1.9" fill="#000"/><rect x="12" y="17.7" width="9" height="1.9" fill="#000"/>
 </svg>
 <div class="title">CALIBAN PALM final</div>
 <div style="position:absolute;left:840px;top:0;width:48px;height:1px;background:#5b5bd6"></div>
 <div style="position:absolute;left:888px;top:0;width:193px;height:1px;background:#d8d8d8"></div>
</div>
<div id="tb"></div>
<div class="sep" style="left:192px"></div>
<div class="sep" style="left:289px"></div>
<div class="sep" style="left:1225px"></div>
<div class="sep" style="left:1298px"></div>
<div class="sep" style="left:1395px"></div>
<div class="sep" style="left:1540px"></div>
<svg width="1542" height="48" style="position:absolute;left:0;top:48px" viewBox="0 48 1542 48">
 <!-- copy (disabled) -->
 <g fill="none" stroke="#c3cdd8" stroke-width="0.9">
  <rect x="12.4" y="60.4" width="17" height="17"/>
  <rect x="18.5" y="66.7" width="17" height="16.7" fill="#f0f0f2"/>
 </g>
 <!-- paste -->
 <rect x="61" y="62.9" width="15.2" height="20.3" fill="none" stroke="#1d2727" stroke-width="1.2"/>
 <path d="M64.6 62.4 L66 60 H71.2 L72.6 62.4 L71.6 65.4 H65.6 Z" fill="#1d2727"/>
 <circle cx="68.6" cy="62.4" r="1.2" fill="#f0f0f2"/>
 <rect x="70.6" y="69" width="10.6" height="11" rx="0.6" fill="#f0f0f2" stroke="#5b6262" stroke-width="1.2"/>
 <!-- duplicate -->
 <g stroke="#1d2727" fill="#f0f0f2" stroke-linejoin="round">
  <path d="M107.5 72.3 L122 69.6 L124.8 83.2 L110.3 85.9 Z" stroke-width="1"/>
  <path d="M110.5 66.5 L125.5 65.5 L126.7 79.6 L111.7 80.6 Z" stroke-width="1.1"/>
  <rect x="116.6" y="61.2" width="15.1" height="15.2" stroke-width="2"/>
 </g>
 <!-- trash (disabled) -->
 <g fill="none" stroke="#c3cdd8" stroke-width="1.7" stroke-linecap="round">
  <path d="M157.6 62.2 H178.4"/>
  <path d="M164.7 61.6 V59.6 Q164.7 58.2 166.2 58.2 H169.8 Q171.3 58.2 171.3 59.6 V61.6"/>
  <path d="M159.2 64.9 V81.2 Q159.2 84.6 162.6 84.6 H173.4 Q176.8 84.6 176.8 81.2 V64.9"/>
  <path d="M163.6 66.6 V77.4 M168 66.6 V77.4 M172.4 66.6 V77.4" stroke-width="1.3"/>
 </g>
 <!-- undo -->
 <path d="M206.8 71.3 L215.6 64.9 V68.9 Q226 68.4 228.2 77.2 Q224.5 73.3 215.6 73.8 V77.8 Z" fill="#1d2727"/>
 <!-- redo (disabled) -->
 <path d="M275.3 71.3 L266.5 64.9 V68.9 Q256.1 68.4 253.9 77.2 Q257.6 73.3 266.5 73.8 V77.8 Z" fill="#c3cdd8"/>
 <!-- bulb -->
 <g fill="none" stroke="#c3cdd8" stroke-width="1.9">
  <path d="M1243 76.5 Q1243 73.5 1240.8 71.4 Q1238.3 68.8 1238.3 65.8 A8.8 8.8 0 0 1 1255.9 65.8 Q1255.9 68.8 1253.4 71.4 Q1251.2 73.5 1251.2 76.5 Z"/>
  <path d="M1244 59.5 L1241.8 61.7" stroke-width="1"/>
 </g>
 <rect x="1242.5" y="81.9" width="8.5" height="1.8" fill="#c3cdd8"/>
 <rect x="1244.5" y="84.9" width="4.5" height="1.5" fill="#c3cdd8"/>
 <rect x="1268.4" y="60.5" width="1.2" height="22.5" fill="#d0d8e0"/>
 <path d="M1278.4 68.6 H1287.4 L1282.9 73.9 Z" fill="#1d2727"/>
 <!-- group -->
 <path d="M1312.5 62.5 H1329.5 V68.6 A8.3 8.3 0 1 1 1318.5 80 L1312.5 79.6 Z" fill="none" stroke="#c3cdd8" stroke-width="1.9" stroke-linejoin="round"/>
 <!-- ungroup -->
 <g fill="none" stroke="#c3cdd8" stroke-width="1.6">
  <path d="M1367.2 80 H1361.4 V62.4 H1379.5 V67.8"/>
  <circle cx="1375.5" cy="76.4" r="8.2"/>
 </g>
 <!-- align -->
 <g fill="none" stroke="#c3cdd8">
  <path d="M1411.7 59.4 V84" stroke-width="1.6" stroke-linecap="round"/>
  <rect x="1416.1" y="63.4" width="13.8" height="6.5" rx="0.8" stroke-width="1.5"/>
  <rect x="1416.1" y="73.9" width="9" height="6.2" rx="0.8" stroke-width="1.5" fill="#dde1e5"/>
 </g>
 <!-- mirror -->
 <g fill="none" stroke="#c3cdd8" stroke-linejoin="round">
  <path d="M1467.9 57.6 V86.4" stroke-width="1.8" stroke-linecap="round"/>
  <path d="M1453.4 80.5 L1463.2 63.2 V80.5 Z" stroke-width="1"/>
  <path d="M1473 63.2 V80.5 H1482.2 Z" stroke-width="1.9"/>
 </g>
 <!-- magnet -->
 <g fill="none" stroke="#c3cdd8" stroke-width="2" stroke-linejoin="round" transform="translate(1503 80.5) scale(0.86) translate(-1502.2 -80.5)">
  <path d="M1508.2 79.6 L1503.6 68.2 A10.6 10.6 0 0 1 1523.3 60.9 L1527.5 72.2 L1521.8 74.6 L1517.8 63.7 A3.7 3.7 0 0 0 1510.6 66 L1514.3 77 Z"/>
  <path d="M1506 73 L1511.6 70.8 M1519.5 67 L1525.2 64.6" stroke-width="1.3"/>
 </g>
 <g fill="#c3cdd8">
  <circle cx="1503" cy="81.9" r="1.1"/><circle cx="1506.5" cy="84.8" r="1.2"/><circle cx="1511" cy="84.6" r="1.2"/><circle cx="1515.4" cy="82.6" r="1.2"/><circle cx="1520" cy="81" r="1.2"/><circle cx="1524.7" cy="81.8" r="1.2"/><circle cx="1529" cy="83.6" r="1.1"/>
 </g>
</svg>
<!-- view cube -->
<svg width="120" height="330" style="position:absolute;left:0;top:96px" viewBox="0 96 120 330">
 <defs>
  <linearGradient id="cubeTop" x1="0" y1="0" x2="1" y2="1"><stop offset="0" stop-color="#f7f9fa"/><stop offset="1" stop-color="#eef1f3"/></linearGradient>
  <linearGradient id="cubeSide" x1="0" y1="0" x2="0" y2="1"><stop offset="0" stop-color="#f6f7f8"/><stop offset="1" stop-color="#e3e6e8"/></linearGradient>
 </defs>
 <path d="M35.4 121.3 L89.6 120.8 L95.8 167.5 L30.4 168.3 Z" fill="url(#cubeTop)" stroke="#b8bcc0" stroke-width="1"/>
 <path d="M30.4 168.3 L95.8 167.5 L88.3 194.2 L37.9 194.2 Z" fill="url(#cubeSide)" stroke="#b8bcc0" stroke-width="1"/>
 <text transform="translate(58.6 143.6) rotate(90) scale(0.78 1)" x="0" y="0" font-family="Liberation Sans" font-weight="bold" font-size="12" fill="#8d9297" text-anchor="middle">TOP</text>
 <text transform="translate(63.6 185.2) scale(1.42 1)" x="0" y="0" font-family="Liberation Sans" font-weight="bold" font-size="7.8" fill="#8d9297" text-anchor="middle" letter-spacing="0.3">RIGHT</text>
 <!-- nav circles -->
 <g fill="#f7f9fa" fill-opacity="0.55" stroke="#a2a7ac" stroke-width="1">
  <circle cx="34.8" cy="240.6" r="16.4"/>
  <circle cx="34.8" cy="282.8" r="16.4"/>
  <circle cx="34.8" cy="325.1" r="16.4"/>
  <circle cx="34.8" cy="367.1" r="16.4"/>
  <circle cx="34.8" cy="408.9" r="16.4"/>
 </g>
 <path d="M25.9 242.3 L35 233 L44.1 242.3 H41 V250.6 H37.6 V245.2 H32.4 V250.6 H29 V242.3 Z" fill="#d9e9f6" stroke="#9ea4a9" stroke-width="1.1" stroke-linejoin="round"/>
 <g fill="none" stroke="#a2a7ac" stroke-width="1.1">
  <path d="M26.8 278.3 V275 H30 M39.6 275 H42.9 V278.3 M42.9 287.4 V290.6 H39.6 M30 290.6 H26.8 V287.4"/>
 </g>
 <path d="M34.8 278.7 L38.9 282.8 L34.8 286.9 L30.7 282.8 Z" fill="#d9e9f6" stroke="#a2a7ac" stroke-width="1"/>
 <path d="M27.8 325.1 H42 M34.9 318.1 V332.3" stroke="#a2a7ac" stroke-width="2"/>
 <path d="M27.8 367.3 H42" stroke="#a2a7ac" stroke-width="2"/>
 <g fill="#d9e9f6" stroke="#a2a7ac" stroke-width="1" stroke-linejoin="round">
  <path d="M29.5 404.5 L35 401.5 L40.5 404.5 L40.5 411.5 L35 414.5 L29.5 411.5 Z"/>
  <path d="M29.5 404.5 L35 407.5 L40.5 404.5 M35 407.5 V414.5" fill="none"/>
  <path d="M26.5 412 L35 421.5 L43.5 412" fill="none"/>
 </g>
</svg>
<div style="position:absolute;left:1496px;top:1050px;font-size:12px;color:#4a5a6e;white-space:nowrap;">Snap Grid</div>

</body></html>
